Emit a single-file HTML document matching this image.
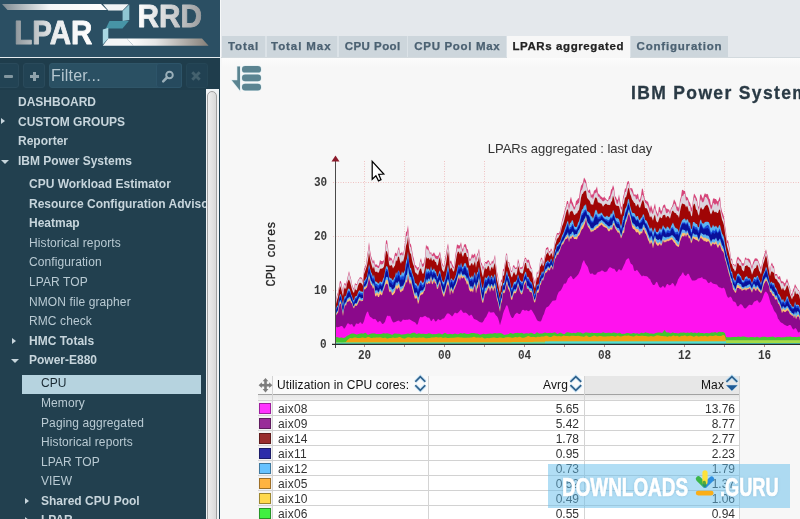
<!DOCTYPE html>
<html>
<head>
<meta charset="utf-8">
<title>LPAR2RRD</title>
<style>
*{box-sizing:border-box;margin:0;padding:0}
html,body{width:800px;height:519px;overflow:hidden;background:#f7f7f7;font-family:"Liberation Sans",sans-serif;}
#root{position:absolute;left:0;top:0;width:800px;height:519px;overflow:hidden;background:#f7f7f7;will-change:transform}
.abs{position:absolute}
/* sidebar */
#side{position:absolute;left:0;top:0;width:220px;height:519px;background:#22404f;overflow:hidden}
#logo{position:absolute;left:0;top:0;width:220px;height:57px;background:#2b4f63}
#logoline{position:absolute;left:0;top:56.6px;width:220px;height:1.2px;background:#e6ecef}
#tool{position:absolute;left:0;top:58px;width:220px;height:32px;background:#1f3d4c}
.tbtn{position:absolute;top:63px;height:25px;border:1px solid #2a4a5b;border-radius:3px;background:#224354}
.tree{position:absolute;white-space:nowrap;font-size:12px;line-height:14px;color:#b9cad3;letter-spacing:0.1px}
.tree.b{font-weight:bold;color:#c7d5dc;letter-spacing:0}
.arr-r{position:absolute;width:0;height:0;border-top:3.5px solid transparent;border-bottom:3.5px solid transparent;border-left:4px solid #c7d5dc}
.arr-d{position:absolute;width:0;height:0;border-left:4px solid transparent;border-right:4px solid transparent;border-top:4.5px solid #c7d5dc}
#sel{position:absolute;left:22px;top:374.5px;width:179px;height:19px;background:#b6d3df}
#sbtrack{position:absolute;left:206px;top:89px;width:13.2px;height:430px;background:#f1f4f6}
#sbthumb{position:absolute;left:207px;top:91px;width:10.4px;height:440px;background:linear-gradient(90deg,#ededed,#d9d9d9);border:1px solid #a0a0a0;border-radius:5.2px}
/* main */
#topbg{position:absolute;left:220px;top:0;width:580px;height:36px;background:#e4e8ec}
#tabrow{position:absolute;left:220px;top:36px;width:580px;height:22px;background:#e4e8ec}
.tab{position:absolute;top:36px;height:22px;background:#d0d8dd;border:1px solid #c3ccd2;border-bottom:none;color:#4b6172;font-weight:bold;font-size:11.5px;line-height:20px;text-align:center;white-space:nowrap;letter-spacing:0.55px}
.tsep{position:absolute;top:36px;width:1.5px;height:21px;background:#dbe2e7}
.tt{position:absolute;top:35.5px;height:20px;line-height:20px;font-size:11.5px;font-weight:bold;color:#4b6172;white-space:nowrap;-webkit-text-stroke:0.25px currentColor}
.tab.act{background:#f7f7f7;color:#222;border-color:#c9d0d5}
#tabline{position:absolute;left:220px;top:57px;width:580px;height:1px;background:#d3dade}
#leftedge{position:absolute;left:220.2px;top:0;width:1.3px;height:519px;background:#f6f8f9}
#h1{position:absolute;left:631px;top:83px;font-size:17.5px;font-weight:bold;color:#2a3a45;white-space:nowrap;letter-spacing:1.35px;-webkit-text-stroke:0.3px #2a3a45}
#ctitle{position:absolute;left:470px;top:141px;width:200px;text-align:center;font-size:13px;color:#333;white-space:nowrap}
.ax{position:absolute;font-family:"Liberation Mono",monospace;font-weight:bold;font-size:12.8px;color:#3a3a3a;line-height:12px;transform:scaleX(0.86);transform-origin:left center;white-space:nowrap}
/* table */
.th{position:absolute;top:377px;height:17px;font-size:12px;line-height:17px;color:#111;white-space:nowrap;letter-spacing:0.11px}
.row{position:absolute;left:258px;width:482px;height:15px;background:linear-gradient(90deg,#f3f3f3 0,#f3f3f3 14px,#fff 14px);border-top:1px solid #d2d2d2}
.row .sw{position:absolute;left:1px;top:2px;width:12px;height:11px;border:1px solid rgba(0,0,0,0.38)}
.row .nm{position:absolute;left:20px;top:1px;font-size:12px;line-height:14px;color:#333;letter-spacing:0.2px}
.row .v1{position:absolute;left:171px;width:150px;text-align:right;top:1px;font-size:12px;line-height:14px;color:#333}
.row .v2{position:absolute;left:327px;width:150px;text-align:right;top:1px;font-size:12px;line-height:14px;color:#333}
.vl{position:absolute;width:1px;background:#d4d4d4}
</style>
</head>
<body>
<div id="root">

<!-- ============ MAIN ============ -->
<div id="topbg"></div>
<div id="tabrow"></div>
<div id="tabline"></div>
<div class="abs" style="left:221.5px;top:58px;width:579px;height:10px;background:linear-gradient(#fcfcfc,#f7f7f7)"></div>
<div class="abs" style="left:221.5px;top:36px;width:506px;height:21px;background:#cdd6dc"></div>
<div class="abs" style="left:507px;top:36px;width:122.5px;height:22px;background:#f7f7f7"></div>
<div class="tsep" style="left:265px"></div>
<div class="tsep" style="left:337px"></div>
<div class="tsep" style="left:406.5px"></div>
<div class="tsep" style="left:505.5px"></div>
<div class="tsep" style="left:629.5px"></div>
<div class="tt" style="left:227.9px;letter-spacing:0.92px">Total</div>
<div class="tt" style="left:271.1px;letter-spacing:0.91px">Total Max</div>
<div class="tt" style="left:344.7px;letter-spacing:0.46px">CPU Pool</div>
<div class="tt" style="left:414.3px;letter-spacing:0.68px">CPU Pool Max</div>
<div class="tt" style="left:512.4px;letter-spacing:0.6px;color:#222">LPARs aggregated</div>
<div class="tt" style="left:636.6px;letter-spacing:0.8px">Configuration</div>

<div id="h1">IBM Power Systems</div>
<div id="ctitle">LPARs aggregated : last day</div>

<!-- chart -->
<svg class="abs" style="left:0;top:0" width="800" height="519" viewBox="0 0 800 519">
<path d="M333,182.5 H800" stroke="#efc2c2" stroke-width="1" stroke-dasharray="1 1.5" fill="none"/>
<path d="M333,236.5 H800" stroke="#efc2c2" stroke-width="1" stroke-dasharray="1 1.5" fill="none"/>
<path d="M333,290.5 H800" stroke="#efc2c2" stroke-width="1" stroke-dasharray="1 1.5" fill="none"/>
<path d="M364.5,161 V347" stroke="#efc2c2" stroke-width="1" stroke-dasharray="1 1.5" fill="none"/>
<path d="M404.5,161 V347" stroke="#efc2c2" stroke-width="1" stroke-dasharray="1 1.5" fill="none"/>
<path d="M444.5,161 V347" stroke="#efc2c2" stroke-width="1" stroke-dasharray="1 1.5" fill="none"/>
<path d="M484.5,161 V347" stroke="#efc2c2" stroke-width="1" stroke-dasharray="1 1.5" fill="none"/>
<path d="M524.5,161 V347" stroke="#efc2c2" stroke-width="1" stroke-dasharray="1 1.5" fill="none"/>
<path d="M564.5,161 V347" stroke="#efc2c2" stroke-width="1" stroke-dasharray="1 1.5" fill="none"/>
<path d="M604.5,161 V347" stroke="#efc2c2" stroke-width="1" stroke-dasharray="1 1.5" fill="none"/>
<path d="M644.5,161 V347" stroke="#efc2c2" stroke-width="1" stroke-dasharray="1 1.5" fill="none"/>
<path d="M684.5,161 V347" stroke="#efc2c2" stroke-width="1" stroke-dasharray="1 1.5" fill="none"/>
<path d="M724.5,161 V347" stroke="#efc2c2" stroke-width="1" stroke-dasharray="1 1.5" fill="none"/>
<path d="M764.5,161 V347" stroke="#efc2c2" stroke-width="1" stroke-dasharray="1 1.5" fill="none"/>
<path fill="#d6457a" d="M336,299.3L337,295.1L338,292.3L339,286.5L340,280.7L341,281.6L342,286.2L343,291.0L344,283.9L345,282.8L346,284.4L347,279.6L348,275.3L349,271.1L350,275.2L351,278.5L352,284.0L353,286.9L354,288.8L355,283.0L356,283.9L357,283.9L358,280.0L359,278.9L360,277.0L361,277.4L362,277.8L363,281.1L364,269.1L365,266.8L366,264.0L367,256.2L368,250.2L369,242.0L370,250.1L371,255.7L372,258.7L373,262.0L374,259.5L375,264.5L376,264.5L377,264.4L378,266.2L379,265.0L380,259.7L381,261.0L382,261.0L383,261.2L384,259.4L385,251.0L386,240.8L387,239.9L388,246.9L389,256.2L390,258.1L391,257.6L392,259.0L393,262.1L394,257.5L395,253.3L396,252.4L397,254.3L398,249.0L399,246.8L400,252.8L401,253.6L402,251.6L403,254.6L404,249.7L405,242.3L406,232.0L407,231.2L408,224.9L409,235.8L410,243.2L411,244.6L412,249.8L413,255.7L414,259.3L415,265.0L416,265.4L417,267.5L418,267.4L419,266.8L420,261.1L421,258.0L422,263.5L423,264.1L424,262.3L425,256.4L426,244.6L427,246.8L428,246.1L429,249.6L430,253.2L431,251.8L432,254.8L433,253.4L434,252.3L435,254.2L436,256.0L437,255.8L438,256.3L439,254.0L440,251.4L441,257.0L442,262.5L443,265.2L444,265.9L445,258.8L446,253.8L447,247.7L448,243.2L449,249.5L450,261.4L451,260.3L452,263.4L453,265.5L454,267.4L455,257.2L456,251.0L457,244.3L458,244.9L459,245.6L460,245.2L461,242.1L462,247.6L463,249.7L464,244.9L465,244.1L466,244.4L467,249.0L468,249.4L469,257.2L470,260.1L471,257.6L472,253.6L473,255.4L474,254.6L475,253.3L476,258.7L477,254.5L478,252.6L479,248.6L480,256.2L481,261.9L482,263.8L483,267.6L484,265.5L485,261.9L486,261.9L487,261.6L488,259.9L489,260.7L490,263.6L491,263.7L492,260.5L493,261.8L494,258.4L495,254.7L496,263.9L497,271.8L498,275.9L499,282.7L500,288.0L501,279.8L502,279.4L503,269.6L504,268.4L505,261.7L506,254.0L507,253.3L508,262.8L509,261.8L510,265.5L511,270.0L512,271.2L513,265.7L514,264.9L515,267.2L516,268.0L517,266.6L518,258.8L519,262.0L520,267.7L521,267.1L522,267.6L523,265.4L524,260.6L525,257.6L526,257.9L527,260.5L528,259.4L529,260.1L530,263.9L531,267.1L532,268.9L533,276.0L534,279.1L535,282.5L536,277.5L537,271.2L538,273.2L539,269.6L540,261.6L541,258.1L542,257.6L543,263.1L544,259.6L545,254.4L546,248.0L547,247.7L548,246.7L549,250.9L550,251.2L551,248.3L552,249.9L553,253.5L554,246.3L555,240.1L556,236.2L557,232.9L558,232.9L559,233.3L560,230.4L561,225.6L562,220.5L563,216.7L564,213.3L565,209.0L566,205.7L567,201.0L568,201.0L569,206.5L570,200.1L571,196.4L572,201.3L573,203.2L574,206.7L575,206.4L576,201.1L577,200.3L578,198.6L579,198.1L580,190.8L581,185.8L582,184.6L583,182.3L584,177.6L585,179.1L586,180.9L587,185.9L588,190.9L589,190.0L590,189.2L591,195.8L592,193.4L593,194.9L594,190.4L595,190.2L596,188.9L597,186.3L598,193.3L599,193.9L600,195.3L601,196.6L602,197.1L603,198.2L604,196.7L605,197.8L606,198.8L607,200.0L608,200.3L609,196.6L610,195.6L611,189.7L612,188.8L613,185.1L614,187.8L615,196.0L616,197.2L617,199.7L618,199.4L619,194.3L620,200.2L621,207.0L622,206.3L623,197.2L624,193.8L625,188.2L626,188.7L627,182.9L628,180.9L629,181.4L630,187.7L631,188.6L632,187.9L633,190.8L634,195.2L635,193.8L636,195.4L637,194.6L638,193.4L639,199.4L640,199.6L641,195.6L642,188.3L643,189.6L644,195.3L645,199.7L646,200.3L647,201.6L648,201.5L649,205.0L650,208.7L651,205.0L652,208.1L653,211.5L654,206.7L655,203.2L656,209.8L657,212.3L658,214.2L659,206.4L660,207.4L661,211.2L662,209.8L663,205.7L664,204.7L665,204.5L666,208.4L667,208.4L668,209.4L669,209.3L670,212.0L671,208.0L672,206.7L673,203.6L674,199.3L675,201.1L676,203.0L677,207.4L678,206.1L679,208.4L680,200.1L681,196.5L682,189.8L683,189.9L684,191.1L685,190.8L686,196.7L687,196.8L688,198.3L689,201.3L690,202.7L691,206.1L692,208.2L693,199.6L694,193.4L695,194.8L696,196.7L697,199.0L698,205.2L699,207.2L700,195.3L701,194.0L702,196.8L703,198.7L704,195.2L705,193.0L706,194.6L707,193.7L708,194.4L709,198.3L710,199.6L711,205.7L712,204.1L713,198.8L714,198.2L715,199.1L716,199.1L717,201.1L718,201.4L719,198.8L720,196.5L721,206.7L722,211.6L723,213.8L724,217.1L725,225.2L726,231.4L727,240.8L728,240.0L729,245.3L730,250.5L731,258.7L732,258.5L733,263.9L734,264.1L735,266.1L736,263.3L737,257.9L738,256.4L739,258.0L740,259.3L741,260.0L742,263.4L743,262.7L744,263.8L745,257.8L746,257.5L747,259.4L748,258.0L749,259.3L750,259.6L751,263.6L752,267.0L753,262.6L754,260.3L755,258.3L756,258.5L757,258.6L758,259.9L759,262.4L760,265.5L761,267.8L762,263.2L763,258.2L764,255.8L765,252.2L766,249.2L767,253.6L768,257.8L769,265.1L770,271.1L771,264.4L772,262.4L773,265.6L774,266.2L775,273.9L776,274.0L777,273.9L778,276.9L779,276.5L780,276.0L781,280.3L782,281.5L783,281.2L784,282.8L785,283.5L786,281.1L787,278.5L788,281.5L789,285.0L790,287.4L791,292.9L792,294.4L793,289.7L794,287.7L795,284.1L796,286.0L797,287.7L798,289.6L799,290.2L800,293.9L800,345.0L336,345.0Z"/>
<path fill="#dcd5de" d="M336,300.8L337,296.6L338,293.9L339,288.4L340,283.1L341,284.0L342,288.4L343,293.0L344,285.2L345,284.1L346,286.7L347,281.2L348,276.9L349,272.7L350,276.7L351,279.8L352,285.3L353,288.5L354,290.3L355,284.3L356,285.5L357,285.1L358,281.4L359,279.4L360,278.6L361,278.6L362,279.4L363,283.6L364,271.8L365,268.7L366,266.0L367,258.7L368,252.4L369,245.8L370,253.3L371,258.4L372,261.3L373,263.7L374,262.1L375,266.8L376,266.8L377,267.1L378,267.9L379,268.1L380,263.9L381,264.6L382,264.3L383,264.0L384,261.6L385,253.9L386,244.5L387,243.4L388,249.2L389,260.8L390,261.0L391,259.8L392,261.1L393,264.4L394,260.4L395,256.3L396,255.5L397,256.7L398,250.5L399,249.1L400,255.2L401,255.3L402,254.0L403,256.1L404,251.9L405,245.9L406,235.8L407,236.4L408,229.9L409,240.1L410,246.4L411,247.7L412,252.6L413,258.9L414,262.3L415,267.8L416,267.4L417,269.9L418,270.5L419,267.8L420,262.4L421,261.0L422,266.5L423,267.1L424,265.4L425,259.8L426,247.4L427,250.0L428,249.0L429,251.6L430,254.5L431,252.8L432,256.2L433,256.1L434,255.4L435,257.7L436,259.1L437,258.8L438,259.4L439,256.5L440,253.8L441,259.6L442,264.9L443,265.9L444,267.1L445,261.5L446,257.1L447,250.8L448,245.4L449,252.6L450,263.8L451,263.1L452,266.4L453,268.0L454,268.5L455,260.0L456,254.0L457,248.6L458,248.2L459,248.8L460,248.1L461,244.6L462,250.5L463,252.3L464,246.8L465,247.1L466,249.3L467,253.5L468,252.4L469,259.9L470,261.3L471,259.8L472,256.9L473,258.6L474,257.4L475,256.4L476,262.5L477,257.1L478,254.2L479,250.8L480,259.0L481,264.3L482,266.0L483,270.7L484,266.6L485,262.9L486,263.6L487,264.3L488,262.1L489,262.2L490,265.5L491,264.4L492,262.7L493,264.1L494,260.7L495,256.2L496,265.8L497,274.3L498,278.2L499,284.9L500,290.2L501,282.6L502,281.7L503,271.7L504,270.8L505,263.9L506,256.0L507,253.9L508,263.2L509,263.1L510,267.3L511,271.7L512,272.1L513,267.2L514,267.2L515,269.0L516,269.1L517,268.4L518,261.8L519,264.3L520,269.6L521,268.6L522,269.3L523,267.2L524,263.0L525,259.2L526,259.0L527,263.0L528,261.9L529,263.2L530,267.8L531,268.7L532,269.2L533,277.0L534,281.8L535,284.5L536,279.0L537,272.9L538,274.5L539,270.3L540,262.3L541,259.7L542,259.2L543,264.8L544,261.3L545,256.2L546,250.0L547,249.6L548,249.0L549,252.6L550,252.7L551,250.0L552,250.9L553,254.9L554,247.6L555,240.9L556,238.4L557,235.1L558,234.3L559,235.0L560,233.0L561,227.7L562,222.2L563,219.5L564,216.1L565,211.0L566,208.5L567,204.3L568,204.1L569,209.9L570,204.5L571,202.7L572,205.3L573,207.0L574,210.0L575,208.7L576,205.3L577,204.8L578,203.6L579,202.7L580,196.0L581,190.7L582,189.8L583,186.8L584,181.0L585,182.9L586,183.4L587,188.6L588,191.9L589,192.7L590,193.3L591,198.2L592,196.7L593,199.6L594,195.5L595,192.5L596,193.6L597,191.4L598,196.9L599,196.2L600,198.8L601,199.0L602,200.4L603,201.6L604,201.1L605,200.0L606,199.5L607,201.2L608,201.2L609,198.9L610,199.6L611,195.5L612,193.1L613,188.9L614,191.0L615,198.8L616,200.6L617,204.6L618,203.1L619,199.0L620,204.7L621,209.4L622,209.4L623,199.9L624,196.5L625,192.1L626,191.7L627,186.7L628,183.4L629,183.8L630,188.4L631,190.6L632,191.9L633,194.5L634,196.8L635,195.5L636,199.3L637,199.3L638,197.9L639,201.5L640,202.5L641,199.6L642,194.7L643,195.3L644,198.5L645,202.4L646,203.2L647,204.4L648,206.0L649,209.2L650,213.9L651,210.2L652,213.2L653,214.1L654,209.8L655,207.7L656,212.8L657,215.6L658,216.9L659,211.8L660,212.6L661,214.8L662,213.0L663,208.4L664,207.3L665,207.9L666,212.7L667,213.5L668,212.1L669,211.3L670,214.7L671,210.0L672,207.4L673,206.5L674,203.2L675,204.3L676,207.3L677,211.0L678,210.4L679,212.3L680,203.4L681,199.6L682,195.5L683,196.2L684,193.8L685,194.0L686,201.1L687,199.7L688,200.7L689,206.2L690,205.6L691,211.8L692,210.7L693,202.9L694,197.8L695,197.4L696,200.7L697,201.6L698,207.4L699,210.5L700,201.5L701,199.1L702,202.0L703,202.5L704,201.0L705,197.1L706,197.0L707,198.2L708,199.9L709,203.6L710,206.1L711,209.5L712,208.1L713,202.7L714,203.4L715,204.9L716,203.5L717,203.8L718,206.7L719,201.5L720,201.0L721,210.9L722,215.3L723,218.1L724,220.6L725,228.3L726,234.5L727,242.9L728,243.3L729,248.1L730,252.4L731,260.9L732,259.4L733,264.8L734,265.2L735,266.8L736,265.6L737,261.8L738,258.8L739,259.9L740,261.5L741,261.9L742,266.3L743,265.3L744,265.7L745,260.4L746,259.1L747,260.2L748,260.0L749,262.4L750,262.8L751,266.0L752,269.3L753,265.2L754,263.0L755,260.8L756,261.0L757,260.8L758,261.5L759,264.1L760,267.2L761,270.6L762,264.7L763,259.8L764,258.0L765,255.6L766,251.6L767,255.2L768,260.3L769,266.7L770,272.8L771,266.0L772,265.0L773,268.5L774,268.1L775,275.8L776,275.6L777,275.7L778,278.8L779,279.2L780,279.4L781,283.0L782,283.5L783,282.7L784,286.3L785,286.6L786,283.6L787,281.7L788,283.8L789,286.1L790,289.1L791,294.6L792,297.0L793,292.4L794,291.0L795,286.6L796,288.2L797,288.5L798,290.6L799,291.2L800,295.3L800,345.0L336,345.0Z"/>
<path fill="#a00505" d="M336,303.9L337,300.1L338,297.2L339,290.4L340,286.0L341,288.0L342,292.2L343,295.9L344,289.6L345,287.2L346,289.4L347,283.9L348,280.7L349,279.6L350,281.9L351,285.4L352,289.2L353,291.9L354,293.1L355,288.6L356,290.6L357,289.7L358,285.8L359,283.4L360,282.6L361,283.2L362,283.8L363,285.9L364,274.2L365,271.4L366,268.6L367,265.4L368,259.9L369,252.2L370,258.3L371,262.7L372,266.2L373,268.9L374,266.3L375,271.4L376,272.1L377,271.6L378,272.9L379,272.0L380,268.8L381,268.7L382,268.6L383,268.1L384,266.2L385,258.4L386,251.0L387,251.5L388,255.3L389,263.9L390,266.2L391,265.0L392,265.4L393,268.5L394,266.7L395,265.4L396,259.9L397,261.6L398,256.8L399,256.7L400,261.5L401,263.8L402,260.6L403,262.0L404,258.3L405,253.5L406,245.7L407,242.9L408,236.7L409,247.5L410,253.0L411,254.0L412,259.9L413,263.9L414,266.3L415,272.1L416,273.3L417,273.8L418,275.4L419,271.6L420,269.1L421,268.2L422,272.6L423,274.3L424,272.2L425,266.8L426,256.5L427,258.9L428,257.7L429,258.4L430,260.2L431,257.1L432,261.0L433,259.9L434,258.9L435,261.8L436,262.1L437,265.7L438,264.6L439,259.3L440,257.1L441,263.8L442,269.4L443,271.0L444,271.9L445,268.1L446,263.7L447,256.6L448,251.1L449,257.9L450,269.7L451,267.4L452,268.5L453,271.2L454,271.4L455,266.4L456,260.1L457,254.2L458,251.4L459,252.1L460,254.6L461,250.8L462,254.8L463,257.0L464,253.5L465,252.8L466,253.0L467,257.3L468,256.7L469,264.8L470,266.3L471,263.9L472,262.7L473,265.7L474,263.7L475,261.0L476,267.8L477,261.7L478,261.3L479,256.4L480,264.1L481,268.9L482,273.9L483,277.2L484,271.3L485,267.1L486,269.4L487,268.5L488,265.8L489,266.5L490,271.6L491,268.3L492,266.5L493,269.4L494,264.9L495,262.9L496,270.8L497,279.9L498,283.8L499,288.9L500,293.3L501,286.6L502,285.1L503,275.7L504,275.5L505,268.1L506,262.0L507,259.3L508,266.5L509,268.3L510,272.0L511,276.1L512,277.6L513,274.2L514,271.7L515,274.0L516,275.5L517,272.9L518,265.8L519,268.3L520,272.8L521,272.6L522,274.0L523,272.8L524,268.1L525,263.1L526,263.1L527,268.7L528,268.0L529,268.8L530,271.2L531,271.5L532,273.4L533,279.5L534,285.5L535,288.4L536,282.6L537,277.0L538,278.0L539,274.6L540,267.1L541,265.6L542,262.8L543,266.4L544,264.4L545,259.1L546,254.7L547,253.6L548,252.1L549,255.3L550,256.1L551,252.9L552,254.0L553,257.7L554,250.8L555,244.9L556,242.6L557,238.5L558,238.3L559,236.1L560,234.6L561,231.0L562,226.6L563,224.3L564,220.9L565,217.0L566,212.7L567,209.8L568,209.3L569,216.1L570,211.8L571,211.4L572,210.6L573,212.3L574,214.8L575,215.0L576,213.3L577,213.5L578,211.0L579,209.9L580,204.6L581,197.8L582,194.3L583,193.4L584,191.3L585,191.3L586,190.3L587,197.5L588,198.9L589,200.0L590,201.4L591,204.8L592,203.9L593,205.2L594,201.6L595,198.0L596,197.3L597,198.8L598,202.7L599,202.2L600,203.4L601,203.3L602,204.6L603,206.7L604,205.2L605,204.3L606,203.4L607,204.5L608,205.1L609,204.7L610,205.2L611,201.9L612,201.0L613,195.5L614,198.5L615,203.4L616,205.4L617,205.7L618,206.0L619,206.3L620,210.2L621,215.3L622,212.8L623,204.5L624,203.3L625,197.4L626,197.3L627,194.0L628,188.7L629,187.8L630,193.7L631,196.1L632,199.5L633,200.7L634,202.7L635,203.2L636,206.5L637,205.0L638,203.7L639,207.1L640,208.1L641,204.8L642,201.6L643,199.7L644,202.6L645,208.0L646,208.3L647,208.5L648,211.3L649,213.7L650,217.6L651,216.1L652,217.9L653,220.8L654,216.6L655,214.6L656,220.3L657,222.2L658,222.2L659,219.3L660,216.6L661,218.2L662,218.0L663,215.0L664,215.3L665,214.5L666,218.1L667,216.3L668,216.1L669,217.0L670,218.8L671,214.7L672,211.3L673,210.6L674,212.2L675,212.9L676,213.2L677,215.2L678,215.3L679,218.1L680,211.5L681,206.7L682,203.4L683,203.7L684,204.2L685,204.5L686,207.6L687,205.6L688,207.9L689,212.1L690,210.5L691,215.4L692,216.4L693,206.6L694,203.6L695,204.4L696,209.6L697,210.0L698,214.0L699,215.8L700,209.5L701,207.1L702,209.0L703,209.8L704,208.3L705,206.1L706,205.5L707,204.4L708,206.1L709,208.6L710,212.4L711,214.6L712,212.6L713,209.5L714,211.6L715,212.4L716,211.6L717,213.0L718,213.0L719,210.0L720,209.6L721,215.0L722,219.8L723,222.1L724,225.6L725,232.7L726,238.8L727,246.0L728,249.5L729,253.3L730,257.9L731,263.3L732,264.4L733,268.3L734,269.3L735,271.8L736,269.7L737,263.8L738,262.8L739,264.8L740,266.0L741,265.4L742,269.7L743,270.7L744,271.5L745,265.9L746,265.9L747,265.1L748,266.5L749,267.2L750,267.5L751,270.7L752,274.7L753,272.0L754,269.3L755,268.2L756,267.8L757,264.6L758,265.9L759,270.5L760,272.1L761,274.5L762,269.6L763,264.4L764,261.7L765,258.2L766,255.3L767,259.0L768,265.8L769,270.8L770,276.3L771,272.0L772,271.3L773,272.6L774,272.7L775,278.4L776,279.0L777,279.8L778,281.9L779,282.8L780,284.8L781,288.0L782,290.1L783,287.5L784,290.2L785,290.4L786,288.2L787,285.0L788,286.5L789,290.1L790,294.6L791,297.1L792,299.4L793,296.6L794,296.3L795,290.5L796,294.4L797,293.3L798,294.3L799,295.0L800,299.3L800,345.0L336,345.0Z"/>
<path fill="#5cb4f2" d="M336,309.5L337,306.3L338,305.1L339,298.0L340,294.2L341,294.6L342,299.7L343,304.5L344,298.2L345,295.4L346,296.5L347,291.9L348,288.7L349,288.5L350,289.7L351,294.1L352,296.2L353,299.4L354,300.6L355,296.4L356,296.3L357,295.5L358,292.5L359,290.6L360,290.4L361,291.8L362,291.2L363,292.2L364,281.1L365,280.0L366,278.2L367,276.5L368,271.2L369,263.9L370,268.2L371,272.0L372,273.7L373,277.3L374,274.5L375,281.1L376,281.8L377,281.9L378,283.5L379,283.3L380,281.3L381,282.1L382,282.2L383,279.1L384,277.1L385,271.6L386,266.6L387,266.1L388,267.9L389,276.3L390,278.6L391,277.7L392,279.6L393,280.5L394,278.0L395,276.6L396,271.9L397,274.5L398,271.0L399,270.4L400,274.4L401,275.6L402,271.2L403,273.6L404,272.1L405,270.0L406,261.3L407,258.6L408,251.4L409,261.5L410,267.8L411,267.9L412,272.3L413,275.3L414,278.0L415,283.1L416,283.2L417,284.4L418,287.1L419,284.3L420,281.6L421,280.1L422,282.3L423,283.1L424,281.2L425,276.8L426,267.3L427,269.7L428,268.5L429,269.1L430,270.9L431,266.1L432,270.2L433,269.8L434,268.2L435,271.1L436,271.5L437,276.7L438,275.7L439,272.0L440,270.3L441,275.5L442,279.8L443,281.7L444,282.0L445,278.6L446,275.0L447,269.7L448,264.5L449,270.2L450,281.6L451,278.3L452,278.8L453,281.0L454,279.6L455,277.5L456,274.4L457,270.0L458,266.1L459,264.3L460,267.0L461,262.6L462,266.3L463,267.5L464,264.0L465,262.8L466,263.8L467,268.2L468,267.1L469,274.9L470,277.5L471,277.4L472,275.3L473,278.1L474,274.2L475,271.8L476,278.5L477,272.4L478,271.7L479,266.6L480,275.6L481,281.3L482,286.6L483,288.5L484,282.4L485,276.5L486,278.4L487,277.6L488,275.9L489,275.3L490,279.4L491,275.7L492,275.2L493,279.1L494,275.8L495,273.8L496,280.7L497,287.6L498,290.5L499,295.7L500,299.7L501,293.1L502,291.5L503,283.0L504,283.0L505,278.9L506,273.8L507,270.4L508,275.4L509,277.0L510,281.3L511,286.9L512,288.6L513,285.0L514,281.8L515,282.0L516,281.3L517,279.2L518,274.2L519,277.3L520,280.3L521,280.7L522,282.3L523,280.6L524,275.5L525,272.6L526,271.6L527,277.3L528,276.4L529,278.2L530,280.9L531,281.8L532,283.1L533,288.0L534,292.8L535,294.7L536,289.4L537,283.9L538,285.4L539,283.0L540,276.1L541,274.6L542,271.1L543,272.9L544,270.1L545,264.9L546,262.1L547,261.4L548,260.0L549,262.2L550,261.8L551,258.2L552,260.2L553,264.0L554,257.2L555,250.5L556,248.5L557,244.6L558,244.8L559,242.5L560,241.9L561,239.2L562,235.7L563,233.8L564,231.4L565,228.3L566,225.5L567,222.2L568,220.4L569,226.8L570,223.1L571,222.4L572,220.1L573,220.8L574,225.4L575,227.0L576,227.1L577,226.6L578,222.8L579,221.3L580,217.4L581,212.6L582,209.4L583,208.8L584,205.6L585,205.5L586,204.1L587,210.9L588,211.6L589,212.2L590,213.0L591,216.4L592,216.3L593,218.7L594,215.3L595,211.1L596,209.6L597,210.9L598,214.4L599,213.3L600,213.9L601,212.6L602,212.9L603,215.0L604,216.3L605,216.9L606,216.5L607,215.4L608,216.8L609,216.9L610,216.3L611,213.1L612,214.4L613,209.8L614,211.7L615,216.4L616,218.4L617,218.0L618,218.6L619,219.3L620,223.1L621,226.7L622,223.0L623,216.3L624,215.6L625,209.1L626,207.6L627,205.0L628,199.3L629,199.2L630,205.6L631,209.0L632,212.6L633,212.9L634,213.0L635,214.1L636,217.0L637,216.0L638,215.9L639,219.6L640,220.0L641,217.8L642,217.2L643,214.2L644,214.7L645,219.7L646,220.3L647,221.2L648,224.0L649,226.3L650,229.2L651,227.3L652,228.8L653,232.6L654,229.2L655,227.3L656,231.4L657,232.2L658,232.0L659,229.8L660,227.8L661,230.3L662,228.0L663,224.9L664,227.1L665,227.7L666,229.2L667,226.2L668,227.2L669,227.8L670,230.0L671,226.3L672,224.2L673,222.6L674,225.1L675,227.3L676,228.2L677,228.4L678,229.6L679,232.4L680,226.3L681,223.2L682,220.6L683,219.4L684,218.8L685,218.4L686,221.1L687,218.9L688,219.7L689,222.9L690,222.1L691,228.7L692,228.8L693,222.0L694,222.1L695,222.8L696,224.0L697,224.1L698,227.2L699,227.1L700,220.8L701,219.6L702,222.9L703,223.6L704,223.4L705,221.8L706,221.9L707,221.5L708,222.1L709,222.3L710,225.3L711,228.1L712,227.2L713,224.6L714,226.6L715,226.7L716,225.6L717,227.3L718,228.0L719,225.5L720,225.0L721,229.5L722,233.6L723,234.9L724,237.6L725,244.0L726,249.1L727,254.5L728,257.2L729,261.4L730,266.6L731,271.4L732,271.5L733,277.2L734,278.8L735,281.3L736,279.4L737,274.6L738,273.5L739,273.8L740,275.5L741,276.2L742,280.0L743,279.8L744,281.0L745,276.9L746,276.8L747,275.9L748,278.2L749,278.5L750,278.2L751,280.8L752,283.8L753,280.2L754,277.2L755,276.9L756,277.8L757,275.5L758,276.2L759,279.2L760,281.0L761,284.0L762,279.4L763,274.7L764,272.5L765,270.3L766,266.4L767,268.9L768,274.1L769,278.5L770,284.1L771,281.5L772,282.2L773,283.5L774,282.5L775,286.8L776,287.9L777,289.8L778,293.4L779,294.3L780,295.8L781,298.1L782,300.8L783,298.8L784,301.4L785,301.7L786,299.1L787,295.7L788,297.2L789,301.0L790,303.6L791,304.3L792,306.8L793,306.6L794,306.9L795,301.3L796,305.1L797,304.4L798,304.8L799,305.3L800,308.8L800,345.0L336,345.0Z"/>
<path fill="#1848d8" d="M336,310.0L337,307.1L338,306.4L339,299.2L340,295.3L341,295.8L342,301.6L343,306.7L344,300.2L345,296.9L346,298.0L347,293.7L348,290.9L349,290.6L350,291.4L351,295.3L352,297.3L353,300.7L354,302.2L355,297.9L356,297.8L357,297.1L358,294.3L359,292.3L360,292.3L361,293.4L362,292.7L363,293.7L364,282.5L365,281.6L366,279.5L367,278.0L368,272.7L369,266.1L370,270.3L371,274.1L372,275.9L373,279.0L374,275.9L375,282.9L376,284.1L377,284.0L378,285.6L379,284.9L380,282.6L381,283.9L382,284.7L383,281.7L384,279.2L385,273.5L386,268.8L387,268.8L388,270.4L389,278.4L390,280.6L391,279.5L392,281.6L393,282.7L394,280.0L395,278.5L396,273.5L397,275.7L398,271.5L399,271.1L400,276.1L401,278.1L402,274.9L403,277.1L404,275.0L405,272.2L406,264.4L407,262.5L408,255.0L409,264.0L410,270.5L411,270.1L412,274.3L413,276.8L414,280.2L415,285.0L416,285.3L417,286.5L418,289.2L419,285.9L420,283.2L421,282.1L422,284.5L423,284.9L424,283.0L425,279.2L426,270.3L427,273.0L428,271.3L429,271.2L430,272.7L431,267.9L432,272.5L433,272.1L434,270.5L435,273.3L436,273.2L437,278.4L438,277.6L439,274.3L440,272.7L441,277.6L442,281.7L443,283.9L444,284.5L445,280.4L446,277.2L447,272.8L448,268.2L449,272.9L450,283.7L451,279.7L452,280.1L453,282.6L454,281.0L455,278.9L456,276.0L457,271.7L458,267.5L459,265.1L460,267.6L461,263.9L462,267.9L463,269.5L464,266.2L465,265.9L466,266.8L467,271.1L468,269.4L469,276.4L470,278.9L471,279.4L472,277.8L473,280.2L474,275.7L475,273.3L476,280.5L477,274.6L478,274.1L479,268.9L480,277.6L481,283.5L482,288.9L483,290.6L484,284.2L485,278.6L486,280.6L487,279.2L488,276.9L489,276.1L490,280.6L491,277.0L492,276.9L493,280.9L494,277.8L495,275.6L496,282.4L497,289.2L498,292.2L499,297.4L500,301.2L501,294.5L502,293.3L503,284.9L504,285.0L505,281.2L506,276.3L507,273.0L508,277.7L509,278.9L510,282.7L511,288.3L512,289.9L513,286.7L514,283.7L515,284.0L516,283.2L517,280.5L518,275.2L519,278.4L520,281.8L521,282.3L522,283.7L523,282.2L524,277.6L525,275.0L526,273.5L527,279.0L528,277.9L529,279.5L530,282.1L531,283.0L532,284.0L533,288.8L534,293.7L535,295.7L536,290.4L537,284.8L538,286.3L539,283.9L540,276.9L541,275.5L542,272.2L543,274.3L544,271.3L545,266.0L546,263.4L547,262.6L548,261.1L549,263.2L550,262.7L551,259.0L552,261.0L553,264.9L554,258.3L555,252.3L556,250.5L557,246.1L558,246.2L559,244.0L560,243.5L561,240.7L562,237.6L563,235.8L564,233.1L565,230.3L566,227.9L567,224.9L568,222.8L569,229.4L570,227.0L571,227.1L572,224.6L573,223.9L574,227.9L575,229.5L576,229.2L577,228.9L578,225.7L579,224.7L580,220.9L581,216.1L582,213.4L583,213.0L584,210.0L585,210.4L586,208.7L587,214.5L588,214.5L589,215.7L590,217.2L591,221.1L592,220.2L593,221.9L594,218.4L595,215.3L596,214.0L597,215.0L598,217.7L599,216.6L600,216.8L601,214.9L602,214.9L603,216.9L604,218.0L605,218.9L606,219.2L607,219.3L608,220.5L609,219.9L610,218.6L611,216.5L612,218.4L613,214.3L614,214.4L615,218.2L616,220.8L617,221.6L618,222.5L619,222.1L620,225.4L621,228.9L622,225.9L623,219.8L624,219.9L625,213.1L626,211.1L627,208.3L628,203.6L629,203.3L630,209.2L631,212.5L632,215.8L633,216.0L634,216.3L635,217.6L636,220.1L637,219.6L638,218.9L639,222.4L640,222.5L641,220.4L642,219.4L643,216.6L644,217.8L645,222.6L646,223.0L647,224.0L648,226.5L649,228.5L650,231.8L651,230.1L652,232.1L653,237.0L654,232.9L655,229.7L656,232.9L657,233.9L658,234.1L659,232.5L660,230.9L661,233.3L662,231.2L663,227.5L664,229.2L665,230.6L666,233.0L667,230.1L668,230.5L669,230.2L670,231.5L671,228.2L672,227.4L673,227.3L674,230.1L675,231.9L676,232.4L677,231.4L678,232.0L679,234.2L680,228.2L681,225.2L682,222.8L683,222.5L684,222.5L685,222.2L686,224.4L687,222.1L688,222.9L689,226.5L690,226.0L691,232.5L692,231.4L693,225.4L694,226.1L695,226.8L696,227.4L697,227.1L698,229.9L699,230.7L700,224.7L701,222.5L702,225.3L703,227.2L704,228.2L705,226.6L706,226.3L707,225.1L708,225.1L709,226.1L710,229.8L711,232.8L712,231.5L713,229.5L714,231.1L715,230.4L716,228.3L717,231.2L718,232.4L719,229.7L720,228.8L721,233.4L722,237.6L723,238.9L724,242.1L725,248.5L726,252.3L727,256.6L728,259.0L729,263.6L730,268.5L731,273.1L732,273.5L733,279.7L734,280.8L735,282.7L736,280.6L737,276.1L738,275.5L739,275.7L740,277.1L741,277.9L742,282.3L743,281.5L744,282.6L745,278.9L746,279.3L747,277.9L748,279.8L749,279.5L750,279.3L751,281.7L752,284.8L753,281.4L754,279.1L755,279.0L756,279.9L757,277.3L758,277.5L759,280.3L760,282.1L761,285.1L762,281.0L763,276.3L764,274.0L765,271.9L766,268.2L767,270.8L768,275.6L769,279.5L770,284.7L771,282.6L772,283.8L773,285.3L774,284.3L775,288.8L776,289.5L777,291.0L778,294.7L779,296.3L780,298.1L781,300.4L782,302.8L783,300.5L784,302.6L785,302.5L786,300.7L787,297.9L788,299.3L789,302.1L790,304.4L791,305.2L792,307.9L793,307.6L794,308.3L795,303.0L796,306.7L797,305.5L798,305.9L799,306.6L800,310.2L800,345.0L336,345.0Z"/>
<path fill="#0a109a" d="M336,311.5L337,308.3L338,307.3L339,300.1L340,296.7L341,297.5L342,303.7L343,308.6L344,302.2L345,298.4L346,299.1L347,294.9L348,292.7L349,292.3L350,292.5L351,296.1L352,298.7L353,302.5L354,304.1L355,299.7L356,299.3L357,298.4L358,295.9L359,294.2L360,293.9L361,294.9L362,294.4L363,295.6L364,284.5L365,283.7L366,281.5L367,279.0L368,273.8L369,268.0L370,273.0L371,276.5L372,278.2L373,281.5L374,278.4L375,285.2L376,286.3L377,286.5L378,288.4L379,287.6L380,284.5L381,285.7L382,286.6L383,283.8L384,281.4L385,276.0L386,270.8L387,271.0L388,272.5L389,280.7L390,283.0L391,282.4L392,284.5L393,285.3L394,282.6L395,281.1L396,276.2L397,279.1L398,276.2L399,275.0L400,279.3L401,280.4L402,278.4L403,280.7L404,278.8L405,276.1L406,268.0L407,265.4L408,257.8L409,266.9L410,273.0L411,272.2L412,276.8L413,280.0L414,284.2L415,288.4L416,287.6L417,288.7L418,292.4L419,289.5L420,285.8L421,284.7L422,287.0L423,287.4L424,285.4L425,281.8L426,272.9L427,274.8L428,273.2L429,272.9L430,275.2L431,270.0L432,275.1L433,274.2L434,272.2L435,274.5L436,275.0L437,280.5L438,279.1L439,275.0L440,273.5L441,279.1L442,283.3L443,285.3L444,286.5L445,283.0L446,279.8L447,275.6L448,271.5L449,275.6L450,285.7L451,281.6L452,282.4L453,285.1L454,282.7L455,280.0L456,277.8L457,275.0L458,271.6L459,268.2L460,270.0L461,266.8L462,270.4L463,271.8L464,267.6L465,267.8L466,268.5L467,273.8L468,272.2L469,279.2L470,280.9L471,280.9L472,279.9L473,283.3L474,278.9L475,275.2L476,282.2L477,276.7L478,276.5L479,271.0L480,280.0L481,286.1L482,291.5L483,293.0L484,286.6L485,280.6L486,282.8L487,281.4L488,279.2L489,278.1L490,282.5L491,278.9L492,278.9L493,283.4L494,279.9L495,277.3L496,284.0L497,290.8L498,293.8L499,299.1L500,303.1L501,295.7L502,294.0L503,285.7L504,286.8L505,283.7L506,278.1L507,274.5L508,279.6L509,281.3L510,284.6L511,290.6L512,292.1L513,288.6L514,285.1L515,285.4L516,284.8L517,282.4L518,277.1L519,280.4L520,283.5L521,284.4L522,286.0L523,284.0L524,278.9L525,276.4L526,275.2L527,281.3L528,280.4L529,281.9L530,284.1L531,284.8L532,285.7L533,290.7L534,295.8L535,297.8L536,291.9L537,285.9L538,287.3L539,285.3L540,278.3L541,277.2L542,274.3L543,276.4L544,272.8L545,267.3L546,265.2L547,264.5L548,262.6L549,264.4L550,264.1L551,260.3L552,262.1L553,265.8L554,259.5L555,253.6L556,251.7L557,246.8L558,247.2L559,245.2L560,245.0L561,242.0L562,239.0L563,237.6L564,235.1L565,232.4L566,230.0L567,227.2L568,224.6L569,230.8L570,228.7L571,229.2L572,226.6L573,225.5L574,229.3L575,230.6L576,230.5L577,230.4L578,227.0L579,226.2L580,223.0L581,218.5L582,215.3L583,214.9L584,212.2L585,212.5L586,209.9L587,215.3L588,215.1L589,216.8L590,219.3L591,223.1L592,221.7L593,223.3L594,220.2L595,217.3L596,216.3L597,217.3L598,219.6L599,218.4L600,219.2L601,217.0L602,216.3L603,218.0L604,219.1L605,220.1L606,220.7L607,221.3L608,222.5L609,221.7L610,220.0L611,218.1L612,220.1L613,215.8L614,215.5L615,219.5L616,222.7L617,223.7L618,224.3L619,224.0L620,227.5L621,231.3L622,228.1L623,222.1L624,221.6L625,214.7L626,212.5L627,209.6L628,204.9L629,204.8L630,211.0L631,214.4L632,217.3L633,217.3L634,217.1L635,218.4L636,220.8L637,220.8L638,219.8L639,223.1L640,223.6L641,222.6L642,222.0L643,219.1L644,219.3L645,223.6L646,224.3L647,225.9L648,228.7L649,230.6L650,233.7L651,231.8L652,233.6L653,238.6L654,234.9L655,231.5L656,234.2L657,235.0L658,235.6L659,234.2L660,233.2L661,235.8L662,233.4L663,229.0L664,230.6L665,232.2L666,234.8L667,232.3L668,233.0L669,232.7L670,233.4L671,229.9L672,228.9L673,229.0L674,231.8L675,233.8L676,234.8L677,233.9L678,234.5L679,236.1L680,230.4L681,227.1L682,224.4L683,223.6L684,223.9L685,223.3L686,225.5L687,223.6L688,224.7L689,228.6L690,227.9L691,234.5L692,232.7L693,227.1L694,228.1L695,229.1L696,229.7L697,229.2L698,232.3L699,233.1L700,226.9L701,224.1L702,226.9L703,228.8L704,229.5L705,228.3L706,228.7L707,228.0L708,228.3L709,229.5L710,232.6L711,235.1L712,233.5L713,232.0L714,233.7L715,233.5L716,230.9L717,232.8L718,233.6L719,231.6L720,231.2L721,235.5L722,239.3L723,240.4L724,243.8L725,249.9L726,253.5L727,257.8L728,260.8L729,265.2L730,269.9L731,274.7L732,275.6L733,281.5L734,282.9L735,285.0L736,283.2L737,277.8L738,276.8L739,277.3L740,279.3L741,279.6L742,283.3L743,282.4L744,283.8L745,280.8L746,282.0L747,280.7L748,281.5L749,280.7L750,280.7L751,283.3L752,286.1L753,282.8L754,280.9L755,281.5L756,282.5L757,279.7L758,279.6L759,281.9L760,283.7L761,286.5L762,282.7L763,277.5L764,275.4L765,273.3L766,270.4L767,272.5L768,277.1L769,280.9L770,286.3L771,284.3L772,285.6L773,287.1L774,286.0L775,290.0L776,290.8L777,292.5L778,297.0L779,298.5L780,300.4L781,302.9L782,304.9L783,301.8L784,304.3L785,305.2L786,303.5L787,300.8L788,301.8L789,304.2L790,306.2L791,307.4L792,309.5L793,308.9L794,309.1L795,304.4L796,308.5L797,307.7L798,308.0L799,308.7L800,312.1L800,345.0L336,345.0Z"/>
<path fill="#5cb4f2" d="M336,313.7L337,311.0L338,310.3L339,303.5L340,300.0L341,300.7L342,306.8L343,312.3L344,306.2L345,302.1L346,302.9L347,299.0L348,297.7L349,297.6L350,296.6L351,299.9L352,301.6L353,305.2L354,306.4L355,303.0L356,303.4L357,302.6L358,299.8L359,297.5L360,296.8L361,298.7L362,297.9L363,298.1L364,286.5L365,286.6L366,284.8L367,283.0L368,278.6L369,273.1L370,277.2L371,280.7L372,281.9L373,285.1L374,282.6L375,290.1L376,291.1L377,289.6L378,292.0L379,291.4L380,288.6L381,289.8L382,291.6L383,288.3L384,285.6L385,281.2L386,277.3L387,276.8L388,277.7L389,285.2L390,287.4L391,286.8L392,289.6L393,289.3L394,288.2L395,287.0L396,281.8L397,283.5L398,282.0L399,280.9L400,285.9L401,287.3L402,285.4L403,286.3L404,283.5L405,281.6L406,275.5L407,274.6L408,266.1L409,273.0L410,277.5L411,276.5L412,282.4L413,286.8L414,291.4L415,294.1L416,291.9L417,292.9L418,297.8L419,295.9L420,291.5L421,290.5L422,290.4L423,290.3L424,288.1L425,286.4L426,278.4L427,280.9L428,279.0L429,278.2L430,280.1L431,275.0L432,280.0L433,279.3L434,276.7L435,279.2L436,279.4L437,285.3L438,284.0L439,281.0L440,279.4L441,284.3L442,288.0L443,290.9L444,292.5L445,288.5L446,284.9L447,280.7L448,278.7L449,281.8L450,291.0L451,286.5L452,287.9L453,290.5L454,286.6L455,284.8L456,282.3L457,279.1L458,275.0L459,272.7L460,275.2L461,270.8L462,273.9L463,275.2L464,273.9L465,275.0L466,275.8L467,279.2L468,277.1L469,283.2L470,285.7L471,286.9L472,285.8L473,288.6L474,284.0L475,281.7L476,288.5L477,283.0L478,281.8L479,276.1L480,284.4L481,290.8L482,296.7L483,298.9L484,293.8L485,287.2L486,288.5L487,286.2L488,284.4L489,283.2L490,287.6L491,284.5L492,284.1L493,287.6L494,284.3L495,282.4L496,289.6L497,296.0L498,299.2L499,303.8L500,307.4L501,299.3L502,297.2L503,288.9L504,290.4L505,288.7L506,283.5L507,279.6L508,284.8L509,286.4L510,288.8L511,295.0L512,296.7L513,292.4L514,289.1L515,289.7L516,289.3L517,286.5L518,281.4L519,285.1L520,288.7L521,290.6L522,290.8L523,287.8L524,281.9L525,280.1L526,279.0L527,286.1L528,285.5L529,286.9L530,288.5L531,288.1L532,289.2L533,293.8L534,298.7L535,299.8L536,295.5L537,289.2L538,289.9L539,287.3L540,281.5L541,280.9L542,277.2L543,278.6L544,274.9L545,270.0L546,268.9L547,268.3L548,265.8L549,267.5L550,267.6L551,264.3L552,265.4L553,268.2L554,261.6L555,256.1L556,254.6L557,251.1L558,252.1L559,249.6L560,248.2L561,245.2L562,241.9L563,241.0L564,239.2L565,237.2L566,235.3L567,234.2L568,232.0L569,237.5L570,234.1L571,234.6L572,232.0L573,231.6L574,234.9L575,234.3L576,234.1L577,234.3L578,230.7L579,229.7L580,227.4L581,223.9L582,222.4L583,221.9L584,219.4L585,217.9L586,215.4L587,220.8L588,223.1L589,223.8L590,225.7L591,228.6L592,227.7L593,228.7L594,226.7L595,225.5L596,224.9L597,224.2L598,224.4L599,221.5L600,221.4L601,220.2L602,220.1L603,221.4L604,221.7L605,223.3L606,224.2L607,224.7L608,226.0L609,226.6L610,226.3L611,224.8L612,225.6L613,220.6L614,220.5L615,224.3L616,226.6L617,227.4L618,228.2L619,227.9L620,231.2L621,235.6L622,232.4L623,227.2L624,227.5L625,220.7L626,217.9L627,215.8L628,211.3L629,209.0L630,213.3L631,216.9L632,221.8L633,223.4L634,223.8L635,224.9L636,226.9L637,226.6L638,225.9L639,228.0L640,229.4L641,228.3L642,229.2L643,225.0L644,224.2L645,227.6L646,228.6L647,231.0L648,234.0L649,236.0L650,238.7L651,235.6L652,236.9L653,241.7L654,238.5L655,235.3L656,238.7L657,239.2L658,240.2L659,239.4L660,239.1L661,241.8L662,239.6L663,235.4L664,237.2L665,236.8L666,238.0L667,236.5L668,237.4L669,236.6L670,236.8L671,235.4L672,235.2L673,235.4L674,237.1L675,237.8L676,239.9L677,240.2L678,241.8L679,241.5L680,235.8L681,233.0L682,229.9L683,229.3L684,230.3L685,230.1L686,232.4L687,229.9L688,231.4L689,235.8L690,235.1L691,239.7L692,237.3L693,232.8L694,234.2L695,234.5L696,234.7L697,234.4L698,237.8L699,240.0L700,235.7L701,232.4L702,233.7L703,234.1L704,235.3L705,233.8L706,235.3L707,235.6L708,235.6L709,236.5L710,239.2L711,241.9L712,240.1L713,238.8L714,239.7L715,239.2L716,237.6L717,240.0L718,241.6L719,239.7L720,238.6L721,241.8L722,245.0L723,246.3L724,249.4L725,255.7L726,259.1L727,262.9L728,266.1L729,269.8L730,273.7L731,277.9L732,279.1L733,284.5L734,285.8L735,288.5L736,288.7L737,283.4L738,282.8L739,282.9L740,284.3L741,284.0L742,287.2L743,286.7L744,287.7L745,285.7L746,286.7L747,285.5L748,285.0L749,284.2L750,284.4L751,286.9L752,288.6L753,285.2L754,283.6L755,285.3L756,287.3L757,285.1L758,285.8L759,288.0L760,289.0L761,290.9L762,287.9L763,282.8L764,279.7L765,278.2L766,276.4L767,278.1L768,281.0L769,283.4L770,289.1L771,288.1L772,290.1L773,291.8L774,291.7L775,295.5L776,295.6L777,295.5L778,299.7L779,300.7L780,303.0L781,305.7L782,308.7L783,305.7L784,307.2L785,308.0L786,307.0L787,305.7L788,306.8L789,308.6L790,310.6L791,311.2L792,313.3L793,313.1L794,314.8L795,310.9L796,314.0L797,311.6L798,311.2L799,312.4L800,316.6L800,345.0L336,345.0Z"/>
<path fill="#ffc070" d="M336,314.7L337,312.2L338,311.4L339,305.2L340,301.9L341,302.3L342,308.5L343,314.6L344,308.4L345,304.0L346,304.6L347,300.7L348,299.4L349,299.2L350,297.9L351,301.1L352,302.6L353,306.1L354,307.2L355,303.6L356,304.2L357,304.0L358,301.7L359,299.2L360,298.5L361,300.7L362,300.1L363,299.8L364,287.4L365,287.5L366,286.6L367,285.7L368,281.5L369,276.0L370,280.0L371,283.2L372,284.1L373,287.1L374,284.9L375,292.8L376,293.9L377,291.7L378,293.8L379,293.5L380,290.4L381,291.6L382,293.4L383,290.5L384,288.1L385,283.6L386,280.0L387,279.7L388,281.1L389,288.2L390,290.5L391,289.8L392,293.2L393,292.3L394,290.8L395,289.2L396,284.5L397,286.4L398,284.8L399,283.7L400,289.1L401,290.4L402,288.3L403,288.6L404,285.2L405,283.4L406,279.4L407,280.5L408,272.4L409,278.1L410,281.3L411,279.3L412,284.7L413,288.2L414,292.5L415,296.2L416,295.0L417,296.2L418,301.3L419,299.3L420,294.1L421,292.8L422,292.2L423,292.0L424,290.2L425,289.3L426,281.6L427,283.6L428,282.1L429,280.8L430,282.0L431,276.5L432,282.0L433,281.1L434,278.4L435,281.5L436,282.0L437,287.7L438,286.4L439,283.0L440,281.2L441,285.7L442,289.6L443,292.7L444,294.4L445,290.4L446,286.9L447,283.0L448,280.9L449,284.0L450,292.8L451,287.7L452,289.5L453,291.9L454,288.0L455,286.2L456,284.2L457,280.6L458,276.6L459,274.5L460,277.9L461,273.4L462,276.1L463,276.6L464,275.8L465,277.7L466,278.7L467,282.1L468,280.0L469,286.0L470,288.2L471,289.1L472,287.9L473,290.4L474,286.1L475,284.0L476,291.3L477,285.7L478,284.3L479,278.6L480,286.7L481,292.8L482,298.7L483,301.4L484,297.4L485,290.7L486,291.5L487,288.8L488,286.9L489,285.6L490,289.4L491,286.0L492,285.2L493,289.2L494,286.5L495,284.5L496,291.6L497,297.6L498,301.1L499,305.9L500,309.9L501,301.6L502,299.4L503,290.7L504,291.8L505,289.7L506,284.6L507,280.9L508,286.2L509,287.7L510,290.3L511,296.7L512,298.1L513,293.9L514,291.1L515,291.7L516,290.9L517,288.1L518,283.4L519,286.9L520,290.2L521,292.4L522,293.1L523,289.7L524,283.3L525,281.4L526,280.7L527,288.1L528,287.5L529,289.0L530,290.7L531,290.8L532,291.5L533,295.6L534,299.8L535,301.0L536,296.9L537,290.8L538,291.2L539,288.9L540,283.4L541,283.0L542,278.7L543,280.0L544,276.3L545,272.0L546,271.1L547,270.7L548,267.5L549,268.8L550,268.6L551,265.5L552,266.6L553,269.2L554,263.0L555,257.6L556,256.5L557,252.8L558,253.8L559,251.2L560,249.2L561,246.1L562,243.1L563,242.8L564,240.7L565,238.6L566,237.0L567,236.8L568,234.6L569,240.1L570,235.9L571,237.1L572,235.4L573,234.9L574,237.6L575,237.0L576,236.5L577,236.8L578,233.9L579,233.3L580,231.2L581,227.7L582,225.7L583,224.7L584,222.5L585,220.9L586,217.5L587,222.8L588,225.4L589,226.1L590,227.8L591,230.7L592,229.6L593,230.5L594,228.8L595,227.6L596,227.0L597,226.1L598,226.1L599,223.7L600,223.5L601,222.7L602,222.3L603,224.2L604,224.3L605,225.8L606,226.1L607,226.8L608,228.5L609,228.9L610,228.3L611,227.1L612,228.4L613,223.7L614,222.7L615,226.1L616,227.9L617,229.5L618,231.0L619,230.6L620,233.2L621,237.2L622,234.7L623,230.2L624,230.4L625,223.3L626,220.4L627,218.8L628,214.1L629,212.0L630,216.0L631,219.3L632,223.7L633,225.5L634,226.1L635,227.0L636,228.9L637,229.1L638,229.0L639,230.9L640,232.0L641,231.0L642,232.0L643,228.0L644,227.1L645,230.3L646,231.0L647,233.4L648,237.1L649,239.0L650,242.0L651,239.3L652,241.0L653,245.5L654,241.3L655,237.8L656,241.3L657,242.4L658,243.8L659,242.5L660,241.9L661,244.4L662,242.8L663,238.9L664,241.0L665,239.7L666,240.5L667,238.7L668,239.6L669,238.4L670,238.4L671,237.3L672,237.4L673,238.4L674,240.0L675,240.2L676,242.5L677,243.5L678,245.2L679,244.3L680,238.9L681,236.5L682,233.4L683,232.5L684,233.4L685,232.4L686,235.0L687,232.6L688,233.0L689,236.3L690,235.8L691,241.3L692,239.8L693,235.6L694,236.9L695,236.7L696,237.4L697,236.8L698,239.3L699,241.0L700,237.5L701,235.0L702,236.7L703,236.9L704,238.4L705,236.9L706,238.6L707,238.6L708,238.8L709,239.7L710,241.8L711,244.4L712,242.6L713,242.0L714,243.0L715,242.4L716,240.6L717,243.6L718,245.6L719,243.4L720,241.7L721,245.0L722,247.9L723,248.9L724,251.6L725,257.4L726,260.7L727,264.8L728,268.5L729,271.9L730,275.8L731,280.6L732,281.9L733,287.4L734,288.7L735,290.9L736,290.4L737,285.1L738,285.0L739,285.4L740,286.8L741,286.5L742,289.4L743,288.3L744,289.1L745,287.1L746,288.8L747,287.7L748,288.2L749,287.3L750,286.7L751,288.9L752,291.0L753,288.2L754,286.5L755,288.0L756,289.3L757,286.8L758,287.6L759,289.4L760,290.0L761,292.2L762,289.8L763,284.9L764,281.6L765,280.0L766,278.4L767,280.2L768,282.7L769,285.2L770,290.7L771,290.1L772,292.3L773,294.2L774,293.8L775,297.2L776,297.5L777,297.7L778,302.2L779,302.9L780,304.9L781,307.7L782,310.9L783,308.1L784,309.2L785,310.2L786,309.2L787,307.8L788,308.4L789,310.4L790,312.5L791,312.9L792,314.6L793,314.5L794,316.9L795,313.8L796,317.7L797,315.3L798,314.5L799,315.1L800,318.7L800,345.0L336,345.0Z"/>
<path fill="#8b098b" d="M336,315.5L337,313.7L338,313.1L339,306.9L340,303.6L341,304.1L342,310.2L343,316.0L344,309.5L345,305.0L346,305.8L347,302.2L348,301.5L349,301.6L350,300.2L351,302.9L352,303.5L353,306.9L354,308.5L355,305.5L356,305.9L357,305.5L358,303.5L359,301.2L360,299.9L361,301.5L362,300.8L363,300.9L364,289.2L365,289.6L366,288.3L367,287.2L368,283.1L369,278.1L370,281.7L371,284.9L372,285.8L373,289.0L374,287.1L375,295.4L376,296.8L377,294.5L378,296.9L379,297.0L380,294.1L381,294.8L382,295.4L383,291.6L384,289.2L385,286.0L386,283.7L387,283.7L388,284.8L389,290.9L390,292.5L391,291.0L392,295.2L393,294.9L394,293.8L395,292.6L396,287.4L397,289.8L398,288.2L399,287.3L400,291.6L401,292.5L402,290.4L403,291.0L404,287.4L405,285.4L406,281.6L407,283.0L408,275.5L409,281.4L410,284.8L411,282.3L412,287.6L413,291.2L414,295.6L415,298.9L416,297.9L417,298.8L418,304.3L419,301.8L420,296.0L421,294.7L422,294.5L423,294.1L424,291.3L425,290.2L426,282.4L427,284.4L428,283.8L429,282.8L430,284.3L431,278.5L432,284.5L433,283.5L434,280.6L435,283.4L436,283.5L437,289.3L438,288.5L439,285.1L440,282.4L441,286.9L442,291.9L443,295.3L444,296.9L445,293.5L446,290.1L447,285.8L448,284.0L449,287.2L450,295.6L451,289.9L452,291.6L453,294.1L454,289.9L455,288.1L456,285.6L457,282.9L458,279.6L459,277.1L460,280.7L461,276.6L462,278.8L463,278.1L464,277.0L465,279.8L466,281.4L467,285.1L468,283.2L469,289.5L470,291.3L471,291.7L472,290.6L473,292.8L474,287.8L475,285.6L476,293.5L477,288.9L478,287.2L479,281.3L480,289.3L481,295.9L482,301.4L483,303.2L484,298.9L485,292.8L486,294.2L487,291.4L488,288.8L489,287.8L490,291.9L491,288.7L492,287.5L493,291.4L494,288.9L495,287.2L496,294.1L497,299.7L498,302.4L499,307.5L500,311.8L501,304.1L502,301.1L503,292.4L504,293.6L505,292.1L506,286.9L507,283.2L508,288.4L509,290.3L510,292.7L511,299.0L512,300.2L513,296.3L514,293.1L515,293.4L516,292.7L517,290.1L518,285.0L519,288.4L520,291.9L521,294.1L522,294.4L523,291.4L524,285.4L525,283.4L526,282.1L527,289.2L528,288.3L529,290.1L530,292.2L531,292.1L532,292.9L533,297.2L534,301.7L535,302.7L536,298.8L537,292.6L538,293.3L539,291.2L540,285.6L541,284.2L542,279.4L543,281.0L544,277.8L545,273.4L546,272.5L547,272.2L548,269.3L549,270.4L550,270.2L551,266.9L552,267.8L553,270.0L554,263.8L555,258.9L556,257.7L557,254.2L558,255.2L559,252.6L560,250.5L561,247.3L562,244.6L563,244.4L564,242.4L565,240.1L566,238.7L567,239.0L568,237.0L569,242.3L570,238.1L571,239.3L572,237.3L573,236.4L574,239.0L575,239.0L576,239.1L577,239.6L578,236.4L579,235.8L580,234.1L581,231.1L582,229.3L583,228.4L584,226.0L585,223.5L586,219.1L587,224.1L588,226.9L589,228.1L590,229.7L591,232.5L592,231.0L593,231.8L594,230.3L595,229.9L596,229.4L597,227.9L598,228.2L599,226.2L600,226.3L601,224.8L602,224.8L603,226.6L604,226.7L605,227.6L606,227.8L607,228.6L608,230.8L609,231.5L610,230.4L611,228.8L612,230.4L613,225.9L614,224.8L615,227.9L616,229.8L617,231.3L618,232.9L619,232.2L620,234.9L621,238.5L622,236.5L623,232.5L624,233.5L625,226.1L626,222.7L627,220.6L628,215.9L629,213.9L630,218.1L631,221.8L632,226.8L633,229.1L634,229.3L635,230.3L636,232.2L637,232.4L638,232.1L639,234.4L640,235.0L641,232.8L642,233.7L643,230.0L644,229.5L645,233.0L646,234.3L647,236.8L648,240.1L649,241.7L650,244.5L651,242.0L652,243.7L653,248.4L654,243.8L655,240.2L656,243.9L657,245.0L658,246.2L659,244.7L660,244.0L661,246.1L662,244.3L663,240.3L664,242.7L665,241.5L666,242.4L667,240.5L668,241.4L669,240.6L670,240.6L671,239.5L672,239.5L673,240.9L674,242.5L675,243.2L676,245.6L677,245.7L678,246.9L679,246.4L680,241.4L681,239.0L682,236.6L683,236.1L684,236.7L685,234.6L686,236.9L687,234.6L688,235.3L689,238.8L690,237.8L691,243.4L692,241.8L693,238.0L694,239.1L695,239.2L696,240.3L697,240.0L698,241.3L699,241.8L700,239.0L701,237.4L702,239.5L703,239.6L704,241.5L705,240.5L706,242.0L707,241.8L708,241.3L709,241.4L710,243.9L711,246.8L712,244.7L713,243.3L714,244.5L715,244.4L716,243.5L717,246.2L718,248.3L719,245.8L720,245.0L721,248.2L722,251.1L723,251.4L724,253.8L725,259.4L726,262.2L727,266.3L728,270.6L729,274.3L730,277.6L731,282.0L732,283.4L733,289.3L734,290.6L735,292.6L736,292.7L737,287.9L738,288.1L739,288.1L740,289.6L741,288.7L742,291.2L743,289.4L744,290.3L745,288.9L746,290.9L747,289.2L748,289.6L749,288.7L750,288.3L751,290.4L752,292.7L753,289.6L754,288.3L755,290.0L756,291.2L757,288.4L758,289.7L759,291.6L760,291.9L761,293.6L762,291.9L763,287.2L764,284.1L765,282.3L766,280.4L767,281.5L768,283.9L769,286.3L770,292.3L771,292.0L772,294.4L773,296.2L774,296.0L775,299.5L776,299.6L777,299.2L778,303.4L779,304.3L780,306.6L781,309.6L782,313.3L783,310.9L784,311.6L785,312.2L786,311.6L787,310.5L788,310.5L789,312.0L790,314.4L791,314.6L792,316.0L793,315.6L794,318.3L795,315.6L796,319.5L797,317.0L798,316.2L799,316.9L800,320.5L800,345.0L336,345.0Z"/>
<path fill="#ff12ee" d="M336,326.5L337,327.5L338,327.1L339,327.0L340,326.6L341,325.9L342,326.1L343,327.1L344,328.8L345,328.0L346,326.3L347,324.3L348,323.1L349,324.0L350,324.4L351,324.4L352,323.8L353,326.0L354,327.0L355,325.8L356,323.6L357,323.6L358,324.1L359,323.5L360,322.3L361,322.6L362,324.2L363,323.3L364,321.1L365,317.2L366,314.2L367,311.9L368,311.6L369,314.8L370,316.8L371,317.3L372,317.9L373,318.9L374,319.3L375,318.8L376,319.7L377,321.2L378,322.4L379,321.3L380,321.0L381,321.9L382,323.7L383,324.0L384,323.1L385,321.7L386,318.5L387,316.1L388,315.5L389,316.5L390,315.6L391,318.0L392,320.6L393,322.2L394,322.6L395,322.0L396,321.8L397,320.9L398,320.8L399,320.6L400,321.8L401,321.8L402,321.0L403,319.2L404,320.0L405,319.8L406,320.1L407,319.4L408,319.9L409,319.0L410,319.8L411,319.9L412,320.9L413,321.2L414,322.1L415,322.3L416,323.5L417,324.9L418,323.6L419,319.5L420,317.2L421,316.7L422,317.6L423,316.7L424,316.4L425,315.8L426,316.6L427,317.3L428,317.7L429,317.6L430,319.1L431,321.2L432,320.5L433,318.8L434,319.1L435,321.3L436,321.6L437,320.6L438,319.1L439,319.4L440,320.3L441,320.1L442,319.1L443,318.4L444,318.6L445,316.7L446,315.2L447,313.4L448,313.4L449,313.4L450,314.5L451,315.2L452,316.5L453,315.6L454,313.8L455,312.6L456,313.0L457,313.4L458,312.8L459,311.7L460,310.5L461,309.6L462,311.0L463,312.5L464,312.9L465,312.6L466,312.8L467,313.5L468,314.6L469,315.7L470,315.5L471,314.4L472,315.3L473,317.2L474,319.0L475,319.3L476,319.8L477,320.1L478,321.0L479,321.5L480,322.3L481,322.3L482,322.7L483,321.8L484,320.2L485,318.0L486,317.3L487,315.1L488,312.9L489,310.9L490,312.4L491,312.5L492,312.6L493,312.3L494,312.2L495,314.0L496,315.4L497,316.2L498,318.1L499,321.2L500,325.2L501,321.5L502,318.3L503,313.7L504,310.7L505,308.8L506,306.0L507,305.0L508,306.9L509,310.8L510,314.0L511,316.5L512,317.9L513,317.9L514,316.2L515,314.3L516,313.4L517,312.4L518,313.4L519,314.1L520,313.9L521,312.4L522,310.3L523,309.7L524,310.0L525,310.9L526,310.0L527,310.4L528,311.0L529,311.2L530,309.9L531,309.5L532,310.5L533,312.2L534,313.9L535,315.7L536,318.0L537,320.1L538,320.9L539,321.2L540,321.5L541,321.3L542,318.8L543,315.8L544,314.0L545,310.6L546,308.1L547,306.9L548,306.7L549,305.8L550,304.3L551,303.1L552,301.6L553,300.4L554,300.7L555,300.2L556,300.3L557,296.1L558,293.5L559,291.6L560,291.3L561,289.9L562,288.2L563,286.1L564,283.5L565,283.7L566,283.2L567,281.3L568,278.6L569,277.8L570,276.4L571,275.8L572,277.3L573,279.2L574,279.1L575,277.8L576,277.0L577,275.7L578,274.7L579,273.0L580,270.5L581,268.1L582,264.1L583,261.5L584,259.9L585,262.7L586,264.4L587,265.7L588,267.6L589,271.3L590,273.4L591,273.9L592,273.3L593,273.8L594,274.9L595,274.5L596,274.8L597,272.7L598,272.3L599,271.8L600,271.7L601,271.0L602,270.2L603,271.0L604,271.4L605,272.3L606,271.5L607,271.4L608,269.3L609,268.1L610,266.9L611,267.7L612,268.0L613,269.0L614,268.6L615,269.7L616,271.5L617,272.1L618,270.3L619,269.0L620,269.7L621,270.8L622,269.6L623,267.2L624,264.9L625,262.9L626,260.1L627,259.3L628,258.3L629,258.6L630,261.8L631,264.0L632,264.3L633,265.8L634,270.2L635,271.2L636,270.4L637,269.7L638,271.2L639,272.5L640,274.1L641,275.2L642,276.4L643,275.5L644,275.8L645,276.3L646,276.1L647,276.6L648,276.9L649,278.7L650,278.7L651,281.6L652,283.3L653,285.1L654,285.0L655,284.5L656,282.3L657,281.7L658,284.1L659,286.5L660,287.5L661,287.7L662,286.7L663,285.8L664,286.9L665,287.9L666,285.7L667,283.9L668,284.1L669,285.5L670,285.0L671,284.8L672,283.0L673,283.2L674,284.6L675,286.8L676,284.7L677,282.8L678,279.6L679,277.9L680,276.3L681,275.5L682,273.5L683,272.1L684,274.4L685,275.5L686,276.1L687,274.6L688,273.6L689,274.2L690,276.7L691,278.5L692,280.5L693,280.6L694,280.5L695,280.4L696,280.1L697,279.6L698,278.3L699,278.5L700,277.8L701,278.0L702,276.8L703,278.9L704,278.7L705,279.5L706,279.6L707,281.3L708,282.7L709,283.3L710,282.3L711,281.4L712,283.0L713,283.4L714,284.1L715,283.9L716,284.4L717,284.6L718,286.3L719,287.2L720,287.4L721,287.7L722,288.6L723,287.7L724,287.8L725,289.5L726,293.1L727,296.0L728,297.6L729,297.7L730,296.6L731,296.9L732,298.5L733,301.2L734,301.6L735,301.9L736,303.0L737,306.0L738,306.6L739,305.7L740,304.2L741,304.3L742,304.8L743,306.3L744,307.9L745,308.6L746,308.3L747,307.0L748,306.0L749,304.8L750,304.7L751,305.1L752,305.3L753,303.5L754,301.8L755,301.3L756,301.0L757,300.0L758,300.9L759,302.8L760,302.5L761,301.4L762,299.4L763,297.0L764,294.0L765,292.0L766,291.6L767,292.7L768,294.3L769,297.2L770,301.1L771,304.3L772,305.6L773,308.1L774,310.4L775,312.0L776,313.1L777,315.3L778,318.7L779,319.8L780,321.5L781,322.4L782,322.9L783,323.4L784,324.5L785,325.1L786,325.6L787,326.0L788,325.9L789,325.1L790,324.9L791,325.4L792,327.8L793,329.2L794,329.4L795,328.1L796,328.6L797,330.1L798,332.3L799,332.6L800,331.6L800,345.0L336,345.0Z"/>
<path fill="#44c62e" d="M336,337.3L337,336.9L338,337.2L339,337.8L340,337.7L341,337.6L342,337.6L343,337.9L344,337.9L345,337.6L346,336.7L347,335.8L348,335.6L349,335.0L350,334.3L351,333.7L352,333.4L353,333.5L354,333.5L355,333.9L356,334.2L357,334.8L358,334.1L359,334.1L360,333.6L361,333.5L362,333.3L363,333.7L364,333.3L365,332.7L366,333.0L367,334.2L368,334.8L369,334.4L370,334.0L371,333.6L372,333.6L373,333.3L374,333.4L375,333.3L376,333.9L377,333.9L378,334.1L379,334.0L380,334.1L381,334.1L382,333.7L383,333.3L384,333.3L385,333.5L386,333.5L387,333.2L388,333.4L389,333.7L390,334.1L391,334.5L392,334.7L393,334.4L394,333.6L395,333.6L396,333.4L397,333.8L398,333.7L399,333.8L400,334.1L401,334.7L402,334.6L403,334.4L404,334.2L405,334.2L406,333.9L407,333.7L408,333.5L409,333.8L410,334.0L411,333.5L412,333.1L413,332.7L414,332.7L415,332.7L416,333.7L417,334.0L418,333.6L419,333.3L420,333.6L421,333.9L422,333.7L423,333.8L424,333.7L425,333.9L426,334.0L427,334.0L428,333.6L429,333.3L430,333.4L431,333.7L432,334.2L433,334.2L434,334.0L435,334.2L436,334.1L437,334.0L438,333.6L439,333.6L440,333.6L441,334.1L442,334.4L443,333.9L444,333.2L445,332.8L446,333.3L447,334.0L448,334.3L449,334.0L450,333.7L451,333.9L452,334.2L453,334.3L454,333.7L455,333.4L456,333.8L457,334.2L458,334.3L459,334.0L460,333.3L461,333.1L462,333.5L463,333.5L464,332.9L465,333.3L466,333.8L467,334.1L468,334.0L469,333.9L470,333.4L471,333.0L472,332.9L473,333.1L474,333.1L475,333.3L476,333.4L477,333.5L478,333.7L479,334.2L480,334.7L481,334.6L482,334.2L483,333.7L484,333.8L485,334.3L486,334.3L487,334.1L488,333.7L489,333.7L490,333.6L491,333.6L492,333.8L493,333.5L494,333.3L495,333.1L496,333.2L497,333.4L498,333.2L499,333.3L500,333.0L501,333.2L502,333.4L503,334.3L504,334.7L505,334.9L506,334.4L507,334.5L508,334.2L509,333.9L510,333.1L511,333.1L512,333.5L513,333.7L514,333.5L515,333.1L516,333.1L517,333.1L518,332.8L519,333.2L520,333.0L521,332.9L522,332.7L523,333.5L524,333.7L525,333.4L526,333.2L527,333.2L528,333.4L529,333.4L530,333.1L531,332.7L532,332.9L533,333.4L534,334.0L535,333.9L536,333.1L537,332.2L538,332.8L539,333.4L540,333.6L541,333.6L542,333.6L543,333.3L544,332.7L545,332.5L546,332.7L547,333.2L548,333.1L549,332.9L550,332.8L551,333.1L552,333.0L553,332.7L554,332.4L555,332.2L556,332.9L557,333.8L558,334.0L559,333.1L560,332.7L561,332.8L562,333.4L563,333.8L564,334.3L565,333.7L566,332.8L567,332.2L568,332.3L569,332.4L570,332.8L571,333.1L572,333.3L573,332.9L574,332.8L575,333.2L576,332.9L577,332.6L578,332.3L579,332.6L580,332.4L581,332.5L582,333.2L583,333.5L584,333.2L585,332.4L586,332.5L587,332.6L588,332.7L589,332.8L590,333.0L591,332.9L592,332.6L593,332.9L594,333.0L595,333.1L596,333.0L597,332.9L598,332.9L599,332.8L600,333.1L601,333.2L602,332.8L603,332.3L604,332.6L605,333.1L606,332.9L607,332.9L608,332.8L609,332.7L610,332.7L611,333.2L612,333.0L613,332.4L614,332.5L615,332.8L616,332.9L617,333.2L618,333.5L619,332.7L620,332.7L621,333.4L622,333.9L623,333.8L624,333.8L625,333.8L626,333.3L627,333.1L628,332.9L629,333.2L630,333.6L631,333.7L632,333.4L633,332.9L634,333.1L635,333.6L636,333.5L637,333.3L638,333.6L639,333.9L640,333.4L641,332.8L642,332.7L643,333.2L644,333.1L645,332.6L646,332.3L647,332.9L648,332.8L649,333.4L650,333.4L651,333.6L652,333.6L653,333.8L654,333.7L655,333.2L656,333.0L657,332.7L658,332.6L659,332.5L660,332.6L661,332.7L662,333.0L663,332.3L664,330.5L665,330.1L666,332.2L667,332.5L668,332.6L669,332.6L670,333.3L671,333.2L672,332.7L673,332.2L674,332.9L675,333.0L676,333.1L677,333.2L678,333.5L679,333.3L680,332.8L681,332.5L682,332.7L683,332.6L684,332.6L685,332.7L686,332.9L687,332.7L688,332.6L689,333.0L690,332.8L691,332.3L692,332.5L693,333.0L694,332.8L695,332.5L696,333.0L697,333.2L698,332.8L699,332.3L700,332.9L701,333.1L702,333.1L703,333.1L704,333.4L705,333.2L706,333.0L707,333.0L708,333.2L709,333.2L710,333.2L711,332.5L712,332.4L713,332.6L714,332.4L715,332.1L716,332.4L717,332.9L718,332.2L719,331.8L720,331.7L721,332.2L722,331.9L723,332.0L724,332.5L725,333.2L726,336.9L727,337.2L728,337.3L729,337.3L730,337.3L731,337.2L732,337.1L733,337.1L734,337.1L735,337.1L736,337.0L737,336.9L738,336.6L739,336.7L740,336.8L741,336.9L742,336.6L743,336.4L744,336.4L745,336.7L746,336.9L747,337.2L748,337.3L749,337.4L750,336.9L751,337.1L752,337.0L753,337.1L754,337.2L755,337.4L756,337.1L757,336.8L758,337.0L759,337.4L760,337.5L761,337.2L762,336.8L763,336.7L764,336.7L765,336.7L766,337.1L767,337.3L768,337.3L769,336.9L770,336.9L771,336.8L772,336.7L773,336.6L774,336.9L775,337.4L776,337.5L777,337.1L778,336.9L779,336.9L780,337.1L781,337.4L782,337.2L783,337.3L784,337.2L785,337.2L786,336.7L787,336.7L788,336.7L789,336.7L790,336.6L791,336.8L792,336.9L793,337.1L794,336.9L795,337.0L796,337.0L797,337.2L798,336.7L799,336.7L800,336.7L800,345.0L336,345.0Z"/>
<path fill="#f2a10f" d="M336,341.7L337,342.3L338,342.5L339,342.4L340,342.3L341,343.0L342,343.0L343,342.9L344,342.6L345,342.6L346,341.7L347,340.5L348,339.6L349,338.7L350,338.0L351,338.1L352,338.3L353,338.0L354,337.6L355,337.5L356,337.6L357,337.9L358,338.0L359,338.1L360,337.9L361,337.7L362,337.4L363,337.4L364,337.8L365,338.1L366,337.9L367,337.3L368,337.0L369,337.0L370,337.5L371,337.9L372,338.0L373,337.7L374,337.6L375,337.8L376,337.6L377,337.6L378,337.6L379,337.6L380,337.2L381,337.4L382,337.8L383,338.0L384,337.9L385,337.6L386,338.1L387,338.5L388,338.4L389,337.9L390,337.9L391,338.1L392,337.8L393,337.6L394,337.7L395,337.9L396,337.8L397,337.7L398,337.5L399,337.1L400,337.0L401,337.5L402,338.1L403,338.3L404,338.5L405,338.5L406,338.0L407,337.6L408,337.3L409,337.3L410,337.4L411,337.7L412,337.9L413,337.6L414,337.5L415,337.4L416,337.9L417,337.8L418,337.7L419,337.6L420,337.6L421,337.8L422,337.6L423,337.6L424,337.5L425,338.0L426,338.3L427,338.2L428,338.1L429,338.1L430,338.0L431,337.5L432,337.4L433,337.6L434,337.6L435,337.2L436,337.1L437,337.3L438,337.6L439,337.4L440,337.2L441,337.2L442,337.6L443,338.0L444,337.7L445,337.4L446,337.5L447,338.1L448,338.1L449,338.0L450,337.7L451,337.8L452,337.8L453,337.8L454,337.7L455,337.6L456,337.5L457,337.3L458,337.2L459,337.2L460,337.4L461,337.4L462,337.5L463,337.7L464,337.7L465,337.7L466,337.7L467,337.7L468,337.6L469,337.7L470,337.4L471,337.5L472,337.5L473,337.0L474,336.8L475,336.9L476,337.7L477,337.5L478,337.6L479,337.6L480,337.7L481,337.4L482,337.3L483,337.7L484,338.2L485,338.5L486,338.3L487,338.1L488,338.1L489,338.2L490,337.9L491,337.8L492,337.7L493,337.6L494,337.4L495,337.6L496,337.9L497,338.0L498,337.9L499,337.6L500,337.5L501,337.5L502,337.7L503,337.9L504,337.9L505,337.5L506,337.3L507,337.3L508,337.0L509,337.2L510,337.2L511,337.6L512,337.7L513,337.8L514,337.4L515,336.9L516,336.9L517,337.4L518,337.3L519,336.8L520,336.8L521,337.2L522,337.7L523,337.7L524,337.7L525,337.3L526,337.0L527,336.5L528,336.0L529,336.1L530,336.8L531,337.1L532,337.0L533,336.7L534,336.9L535,336.9L536,337.4L537,336.8L538,336.8L539,336.8L540,337.1L541,336.6L542,336.4L543,336.5L544,336.5L545,336.1L546,335.7L547,335.7L548,336.2L549,336.7L550,337.1L551,337.0L552,336.4L553,335.8L554,335.5L555,335.7L556,336.1L557,336.3L558,336.2L559,336.0L560,336.2L561,336.5L562,336.2L563,335.8L564,335.5L565,335.9L566,336.1L567,336.0L568,336.1L569,336.2L570,336.2L571,335.8L572,335.8L573,335.8L574,335.8L575,336.1L576,336.1L577,336.0L578,335.8L579,335.9L580,336.1L581,336.4L582,336.3L583,336.8L584,336.7L585,336.2L586,335.5L587,335.8L588,336.6L589,337.0L590,336.9L591,336.8L592,336.3L593,336.0L594,335.5L595,335.8L596,336.2L597,336.5L598,336.4L599,336.0L600,335.9L601,335.9L602,336.3L603,336.5L604,336.5L605,336.4L606,336.5L607,336.3L608,336.3L609,336.3L610,336.3L611,336.0L612,336.1L613,336.1L614,336.2L615,336.4L616,336.4L617,335.8L618,335.7L619,336.0L620,336.5L621,336.4L622,336.3L623,336.1L624,335.7L625,335.6L626,335.7L627,335.8L628,335.6L629,335.6L630,335.9L631,336.0L632,336.3L633,336.5L634,336.6L635,336.0L636,335.6L637,335.6L638,335.9L639,336.0L640,335.9L641,335.7L642,335.7L643,335.8L644,336.0L645,335.9L646,336.1L647,336.3L648,336.5L649,336.4L650,336.3L651,336.1L652,336.3L653,336.4L654,336.5L655,336.1L656,335.7L657,335.3L658,335.4L659,335.5L660,335.8L661,335.9L662,336.0L663,336.1L664,336.3L665,336.2L666,336.3L667,336.7L668,336.7L669,336.1L670,336.2L671,336.5L672,336.1L673,335.6L674,335.6L675,336.2L676,336.0L677,335.8L678,336.1L679,336.7L680,336.5L681,336.1L682,335.8L683,336.1L684,335.6L685,335.6L686,335.8L687,336.5L688,336.1L689,335.9L690,335.6L691,335.8L692,336.0L693,336.6L694,336.7L695,336.2L696,335.7L697,335.8L698,336.4L699,336.5L700,336.3L701,336.0L702,336.1L703,336.2L704,336.1L705,335.8L706,336.1L707,336.4L708,336.6L709,336.1L710,335.8L711,335.7L712,335.9L713,336.0L714,335.8L715,335.5L716,335.3L717,335.7L718,335.9L719,335.9L720,336.0L721,336.0L722,335.5L723,334.9L724,335.3L725,335.9L726,340.6L727,340.6L728,340.6L729,340.6L730,340.6L731,340.6L732,340.6L733,340.6L734,340.6L735,340.6L736,340.6L737,340.6L738,340.6L739,340.6L740,340.6L741,340.6L742,340.6L743,340.6L744,340.6L745,340.6L746,340.6L747,340.6L748,340.6L749,340.6L750,340.6L751,340.6L752,340.6L753,340.6L754,340.6L755,340.6L756,340.6L757,340.6L758,340.6L759,340.6L760,340.6L761,340.6L762,340.6L763,340.6L764,340.6L765,340.6L766,340.6L767,340.6L768,340.6L769,340.6L770,340.6L771,340.6L772,340.6L773,340.6L774,340.6L775,340.6L776,340.6L777,340.6L778,340.6L779,340.6L780,340.6L781,340.6L782,340.6L783,340.6L784,340.6L785,340.6L786,340.6L787,340.6L788,340.6L789,340.6L790,340.6L791,340.6L792,340.6L793,340.6L794,340.6L795,340.6L796,340.6L797,340.6L798,340.6L799,340.6L800,340.6L800,345.0L336,345.0Z"/>
<path fill="#6fd98a" d="M336,342.3L337,342.3L338,342.3L339,342.3L340,342.3L341,342.3L342,342.3L343,342.3L344,342.3L345,342.3L346,342.3L347,342.3L348,342.3L349,342.3L350,342.3L351,342.3L352,342.3L353,342.3L354,342.3L355,342.3L356,342.3L357,342.3L358,342.3L359,342.3L360,342.3L361,342.3L362,342.3L363,342.3L364,342.3L365,342.3L366,342.3L367,342.3L368,342.3L369,342.3L370,342.3L371,342.3L372,342.3L373,342.3L374,342.3L375,342.3L376,342.3L377,342.3L378,342.3L379,342.3L380,342.3L381,342.3L382,342.3L383,342.3L384,342.3L385,342.3L386,342.3L387,342.3L388,342.3L389,342.3L390,342.3L391,342.3L392,342.3L393,342.3L394,342.3L395,342.3L396,342.3L397,342.3L398,342.3L399,342.3L400,342.3L401,342.3L402,342.3L403,342.3L404,342.3L405,342.3L406,342.3L407,342.3L408,342.3L409,342.3L410,342.3L411,342.3L412,342.3L413,342.3L414,342.3L415,342.3L416,342.3L417,342.3L418,342.3L419,342.3L420,342.3L421,342.3L422,342.3L423,342.3L424,342.3L425,342.3L426,342.3L427,342.3L428,342.3L429,342.3L430,342.3L431,342.3L432,342.3L433,342.3L434,342.3L435,342.3L436,342.3L437,342.3L438,342.3L439,342.3L440,342.3L441,342.3L442,342.3L443,342.3L444,342.3L445,342.3L446,342.3L447,342.3L448,342.3L449,342.3L450,342.3L451,342.3L452,342.3L453,342.3L454,342.3L455,342.3L456,342.3L457,342.3L458,342.3L459,342.3L460,342.3L461,342.3L462,342.3L463,342.3L464,342.3L465,342.3L466,342.3L467,342.3L468,342.3L469,342.3L470,342.3L471,342.3L472,342.3L473,342.3L474,342.3L475,342.3L476,342.3L477,342.3L478,342.3L479,342.3L480,342.3L481,342.3L482,342.3L483,342.3L484,342.3L485,342.3L486,342.3L487,342.3L488,342.3L489,342.3L490,342.3L491,342.3L492,342.3L493,342.3L494,342.3L495,342.3L496,342.3L497,342.3L498,342.3L499,342.3L500,342.3L501,342.3L502,342.3L503,342.3L504,342.2L505,342.2L506,342.2L507,342.2L508,342.2L509,342.2L510,342.2L511,342.2L512,342.1L513,342.1L514,342.1L515,342.1L516,342.1L517,342.1L518,342.1L519,342.0L520,342.0L521,342.0L522,342.0L523,342.0L524,342.0L525,342.0L526,342.0L527,341.9L528,341.9L529,341.9L530,341.9L531,341.9L532,341.9L533,341.9L534,341.8L535,341.8L536,341.8L537,341.8L538,341.8L539,341.8L540,341.8L541,341.8L542,341.7L543,341.7L544,341.7L545,341.7L546,341.7L547,341.7L548,341.7L549,341.6L550,341.6L551,341.6L552,341.6L553,341.6L554,341.6L555,341.6L556,341.6L557,341.5L558,341.5L559,341.5L560,341.5L561,341.5L562,341.5L563,341.5L564,341.5L565,341.5L566,341.5L567,341.5L568,341.5L569,341.5L570,341.5L571,341.5L572,341.5L573,341.5L574,341.5L575,341.5L576,341.5L577,341.5L578,341.5L579,341.5L580,341.5L581,341.5L582,341.5L583,341.5L584,341.5L585,341.5L586,341.5L587,341.5L588,341.5L589,341.5L590,341.5L591,341.5L592,341.5L593,341.5L594,341.5L595,341.5L596,341.5L597,341.5L598,341.5L599,341.5L600,341.5L601,341.5L602,341.5L603,341.5L604,341.5L605,341.5L606,341.5L607,341.5L608,341.5L609,341.5L610,341.5L611,341.5L612,341.5L613,341.5L614,341.5L615,341.5L616,341.5L617,341.5L618,341.5L619,341.5L620,341.5L621,341.5L622,341.5L623,341.5L624,341.5L625,341.5L626,341.5L627,341.5L628,341.5L629,341.5L630,341.5L631,341.5L632,341.5L633,341.5L634,341.5L635,341.5L636,341.5L637,341.5L638,341.5L639,341.5L640,341.5L641,341.5L642,341.5L643,341.5L644,341.5L645,341.5L646,341.5L647,341.5L648,341.5L649,341.5L650,341.5L651,341.5L652,341.5L653,341.5L654,341.5L655,341.5L656,341.5L657,341.5L658,341.5L659,341.5L660,341.5L661,341.5L662,341.5L663,341.5L664,341.5L665,341.5L666,341.5L667,341.5L668,341.5L669,341.5L670,341.5L671,341.5L672,341.5L673,341.5L674,341.5L675,341.5L676,341.5L677,341.5L678,341.5L679,341.5L680,341.5L681,341.5L682,341.5L683,341.5L684,341.5L685,341.5L686,341.5L687,341.5L688,341.5L689,341.5L690,341.5L691,341.5L692,341.5L693,341.5L694,341.5L695,341.5L696,341.5L697,341.5L698,341.5L699,341.5L700,341.5L701,341.5L702,341.5L703,341.5L704,341.5L705,341.5L706,341.5L707,341.5L708,341.5L709,341.5L710,341.5L711,341.5L712,341.5L713,341.5L714,341.5L715,341.5L716,341.5L717,341.5L718,341.5L719,341.5L720,341.5L721,341.5L722,341.5L723,341.5L724,341.5L725,341.5L726,340.6L727,340.6L728,340.6L729,340.6L730,340.6L731,340.6L732,340.6L733,340.6L734,340.6L735,340.6L736,340.6L737,340.6L738,340.6L739,340.6L740,340.6L741,340.6L742,340.6L743,340.6L744,340.6L745,340.6L746,340.6L747,340.6L748,340.6L749,340.6L750,340.6L751,340.6L752,340.6L753,340.6L754,340.6L755,340.6L756,340.6L757,340.6L758,340.6L759,340.6L760,340.6L761,340.6L762,340.6L763,340.6L764,340.6L765,340.6L766,340.6L767,340.6L768,340.6L769,340.6L770,340.6L771,340.6L772,340.6L773,340.6L774,340.6L775,340.6L776,340.6L777,340.6L778,340.6L779,340.6L780,340.6L781,340.6L782,340.6L783,340.6L784,340.6L785,340.6L786,340.6L787,340.6L788,340.6L789,340.6L790,340.6L791,340.6L792,340.6L793,340.6L794,340.6L795,340.6L796,340.6L797,340.6L798,340.6L799,340.6L800,340.6L800,345.0L336,345.0Z"/>
<path fill="#52dcd4" d="M545,341.5H726V345H545Z"/>
<path fill="#a4dc46" d="M726,340.6H801V345H726Z"/>
<path fill="#49cfc0" d="M336,343.3L337,343.3L338,343.3L339,343.3L340,343.3L341,343.3L342,343.3L343,343.3L344,343.3L345,343.3L346,343.3L347,343.3L348,343.3L349,343.3L350,343.3L351,343.3L352,343.3L353,343.3L354,343.3L355,343.3L356,343.3L357,343.3L358,343.3L359,343.3L360,343.3L361,343.3L362,343.3L363,343.3L364,343.3L365,343.3L366,343.3L367,343.3L368,343.3L369,343.3L370,343.3L371,343.3L372,343.3L373,343.3L374,343.3L375,343.3L376,343.3L377,343.3L378,343.3L379,343.3L380,343.3L381,343.3L382,343.3L383,343.3L384,343.3L385,343.3L386,343.3L387,343.3L388,343.3L389,343.3L390,343.3L391,343.3L392,343.3L393,343.3L394,343.3L395,343.3L396,343.3L397,343.3L398,343.3L399,343.3L400,343.3L401,343.3L402,343.3L403,343.3L404,343.3L405,343.3L406,343.3L407,343.3L408,343.3L409,343.3L410,343.3L411,343.3L412,343.3L413,343.3L414,343.3L415,343.3L416,343.3L417,343.3L418,343.3L419,343.3L420,343.3L421,343.3L422,343.3L423,343.3L424,343.3L425,343.3L426,343.3L427,343.3L428,343.3L429,343.3L430,343.3L431,343.3L432,343.3L433,343.3L434,343.3L435,343.3L436,343.3L437,343.3L438,343.3L439,343.3L440,343.3L441,343.3L442,343.3L443,343.3L444,343.3L445,343.3L446,343.3L447,343.3L448,343.3L449,343.3L450,343.3L451,343.3L452,343.3L453,343.3L454,343.3L455,343.3L456,343.3L457,343.3L458,343.3L459,343.3L460,343.3L461,343.3L462,343.3L463,343.3L464,343.3L465,343.3L466,343.3L467,343.3L468,343.3L469,343.3L470,343.3L471,343.3L472,343.3L473,343.3L474,343.3L475,343.3L476,343.3L477,343.3L478,343.3L479,343.3L480,343.3L481,343.3L482,343.3L483,343.3L484,343.3L485,343.3L486,343.3L487,343.3L488,343.3L489,343.3L490,343.3L491,343.3L492,343.3L493,343.3L494,343.3L495,343.3L496,343.3L497,343.3L498,343.3L499,343.3L500,343.3L501,343.3L502,343.3L503,343.3L504,343.3L505,343.3L506,343.3L507,343.3L508,343.3L509,343.3L510,343.3L511,343.3L512,343.3L513,343.3L514,343.3L515,343.3L516,343.3L517,343.3L518,343.3L519,343.3L520,343.3L521,343.3L522,343.3L523,343.3L524,343.3L525,343.3L526,343.3L527,343.3L528,343.3L529,343.3L530,343.3L531,343.3L532,343.3L533,343.3L534,343.3L535,343.3L536,343.3L537,343.3L538,343.3L539,343.3L540,343.3L541,343.3L542,343.3L543,343.3L544,343.3L545,343.3L546,343.3L547,343.3L548,343.3L549,343.3L550,343.3L551,343.3L552,343.3L553,343.3L554,343.3L555,343.3L556,343.3L557,343.3L558,343.3L559,343.3L560,343.3L561,343.3L562,343.3L563,343.3L564,343.3L565,343.3L566,343.3L567,343.3L568,343.3L569,343.3L570,343.3L571,343.3L572,343.3L573,343.3L574,343.3L575,343.3L576,343.3L577,343.3L578,343.3L579,343.3L580,343.3L581,343.3L582,343.3L583,343.3L584,343.3L585,343.3L586,343.3L587,343.3L588,343.3L589,343.3L590,343.3L591,343.3L592,343.3L593,343.3L594,343.3L595,343.3L596,343.3L597,343.3L598,343.3L599,343.3L600,343.3L601,343.3L602,343.3L603,343.3L604,343.3L605,343.3L606,343.3L607,343.3L608,343.3L609,343.3L610,343.3L611,343.3L612,343.3L613,343.3L614,343.3L615,343.3L616,343.3L617,343.3L618,343.3L619,343.3L620,343.3L621,343.3L622,343.3L623,343.3L624,343.3L625,343.3L626,343.3L627,343.3L628,343.3L629,343.3L630,343.3L631,343.3L632,343.3L633,343.3L634,343.3L635,343.3L636,343.3L637,343.3L638,343.3L639,343.3L640,343.3L641,343.3L642,343.3L643,343.3L644,343.3L645,343.3L646,343.3L647,343.3L648,343.3L649,343.3L650,343.3L651,343.3L652,343.3L653,343.3L654,343.3L655,343.3L656,343.3L657,343.3L658,343.3L659,343.3L660,343.3L661,343.3L662,343.3L663,343.3L664,343.3L665,343.3L666,343.3L667,343.3L668,343.3L669,343.3L670,343.3L671,343.3L672,343.3L673,343.3L674,343.3L675,343.3L676,343.3L677,343.3L678,343.3L679,343.3L680,343.3L681,343.3L682,343.3L683,343.3L684,343.3L685,343.3L686,343.3L687,343.3L688,343.3L689,343.3L690,343.3L691,343.3L692,343.3L693,343.3L694,343.3L695,343.3L696,343.3L697,343.3L698,343.3L699,343.3L700,343.3L701,343.3L702,343.3L703,343.3L704,343.3L705,343.3L706,343.3L707,343.3L708,343.3L709,343.3L710,343.3L711,343.3L712,343.3L713,343.3L714,343.3L715,343.3L716,343.3L717,343.3L718,343.3L719,343.3L720,343.3L721,343.3L722,343.3L723,343.3L724,343.3L725,343.3L726,343.1L727,343.1L728,343.1L729,343.1L730,343.1L731,343.1L732,343.1L733,343.1L734,343.1L735,343.1L736,343.1L737,343.1L738,343.1L739,343.1L740,343.1L741,343.1L742,343.1L743,343.1L744,343.1L745,343.1L746,343.1L747,343.1L748,343.1L749,343.1L750,343.1L751,343.1L752,343.1L753,343.1L754,343.1L755,343.1L756,343.1L757,343.1L758,343.1L759,343.1L760,343.1L761,343.1L762,343.1L763,343.1L764,343.1L765,343.1L766,343.1L767,343.1L768,343.1L769,343.1L770,343.1L771,343.1L772,343.1L773,343.1L774,343.1L775,343.1L776,343.1L777,343.1L778,343.1L779,343.1L780,343.1L781,343.1L782,343.1L783,343.1L784,343.1L785,343.1L786,343.1L787,343.1L788,343.1L789,343.1L790,343.1L791,343.1L792,343.1L793,343.1L794,343.1L795,343.1L796,343.1L797,343.1L798,343.1L799,343.1L800,343.1L800,345.0L336,345.0Z"/>
<path d="M335.5,160 V348" stroke="#4a4a4a" stroke-width="1" fill="none"/>
<path d="M332,344.4 H800" stroke="#2a2a2a" stroke-width="1.4" fill="none"/>
<path d="M335.5,155.5 L339.5,161.5 L331.5,161.5 Z" fill="#8b1a2a"/>
<path d="M364.5,345 V347" stroke="#b08a8a" stroke-width="1" fill="none"/>
<path d="M404.5,345 V347" stroke="#b08a8a" stroke-width="1" fill="none"/>
<path d="M444.5,345 V347" stroke="#b08a8a" stroke-width="1" fill="none"/>
<path d="M484.5,345 V347" stroke="#b08a8a" stroke-width="1" fill="none"/>
<path d="M524.5,345 V347" stroke="#b08a8a" stroke-width="1" fill="none"/>
<path d="M564.5,345 V347" stroke="#b08a8a" stroke-width="1" fill="none"/>
<path d="M604.5,345 V347" stroke="#b08a8a" stroke-width="1" fill="none"/>
<path d="M644.5,345 V347" stroke="#b08a8a" stroke-width="1" fill="none"/>
<path d="M684.5,345 V347" stroke="#b08a8a" stroke-width="1" fill="none"/>
<path d="M724.5,345 V347" stroke="#b08a8a" stroke-width="1" fill="none"/>
<path d="M764.5,345 V347" stroke="#b08a8a" stroke-width="1" fill="none"/>
</svg>

<div class="ax" style="left:313.6px;top:177px">30</div>
<div class="ax" style="left:313.6px;top:231px">20</div>
<div class="ax" style="left:313.6px;top:285px">10</div>
<div class="ax" style="left:320.4px;top:339px">0</div>
<div class="ax" style="left:357.8px;top:350px">20</div>
<div class="ax" style="left:437.8px;top:350px">00</div>
<div class="ax" style="left:517.8px;top:350px">04</div>
<div class="ax" style="left:597.8px;top:350px">08</div>
<div class="ax" style="left:677.8px;top:350px">12</div>
<div class="ax" style="left:757.8px;top:350px">16</div>
<div class="ax" style="left:236.8px;top:247.6px;width:70px;text-align:center;transform:rotate(-90deg);transform-origin:center center;font-weight:normal;font-size:12px;-webkit-text-stroke:0.3px #222;color:#222">CPU cores</div>

<!-- table -->
<div class="abs" style="left:584px;top:376px;width:156px;height:18px;background:#e7e7e7"></div>
<div class="abs" style="left:272px;top:376px;width:312px;height:18px;background:#fafafa"></div>
<div class="abs" style="left:258px;top:394px;width:482px;height:1px;background:#a2a2a2"></div>
<div class="abs" style="left:258px;top:395px;width:482px;height:6px;background:linear-gradient(#e6e6e6,#f3f3f3)"></div>
<div class="th" style="left:277px">Utilization in CPU cores:</div>
<div class="th" style="left:440px;width:128px;text-align:right">Avrg</div>
<div class="th" style="left:600px;width:124px;text-align:right">Max</div>

<div class="row" style="top:400px"><div class="sw" style="background:#ff33ff"></div><div class="nm">aix08</div><div class="v1">5.65</div><div class="v2">13.76</div></div>
<div class="row" style="top:415px"><div class="sw" style="background:#992d99"></div><div class="nm">aix09</div><div class="v1">5.42</div><div class="v2">8.77</div></div>
<div class="row" style="top:430px"><div class="sw" style="background:#992d2d"></div><div class="nm">aix14</div><div class="v1">1.78</div><div class="v2">2.77</div></div>
<div class="row" style="top:445px"><div class="sw" style="background:#2d2daa"></div><div class="nm">aix11</div><div class="v1">0.95</div><div class="v2">2.23</div></div>
<div class="row" style="top:460px"><div class="sw" style="background:#66c2ff"></div><div class="nm">aix12</div><div class="v1">0.73</div><div class="v2">1.79</div></div>
<div class="row" style="top:475px"><div class="sw" style="background:#ffb340"></div><div class="nm">aix05</div><div class="v1">0.52</div><div class="v2">1.37</div></div>
<div class="row" style="top:490px"><div class="sw" style="background:#ffd94d"></div><div class="nm">aix10</div><div class="v1">0.49</div><div class="v2">1.06</div></div>
<div class="row" style="top:505px"><div class="sw" style="background:#40f040"></div><div class="nm">aix06</div><div class="v1">0.55</div><div class="v2">0.94</div></div>
<div class="vl" style="left:272px;top:376px;height:143px"></div>
<div class="vl" style="left:428px;top:376px;height:143px"></div>
<div class="vl" style="left:584px;top:376px;height:143px"></div>
<div class="vl" style="left:739px;top:376px;height:143px"></div>


<!-- icons overlay -->
<svg class="abs" style="left:0;top:0;pointer-events:none" width="800" height="519" viewBox="0 0 800 519">
<!-- sort-list icon -->
<g fill="#5b8491" stroke="#dcecf0" stroke-width="1.2" paint-order="stroke">
<rect x="242" y="66" width="19" height="6.6" rx="3.2"/>
<rect x="242" y="74.6" width="19" height="6.6" rx="3.2"/>
<rect x="242" y="83.8" width="19" height="6.6" rx="3.2"/>
<path d="M237.3,66.5 H240 V90.6 L231.8,80.3 H237.3 Z"/>
</g>
<!-- mouse cursor -->
<path d="M372.2,161.3 L372.2,179.3 L375.9,175.7 L378.5,180.9 L381,179.7 L378.7,174.4 L383.8,174 Z" fill="#fff" stroke="#000" stroke-width="1.25" stroke-linejoin="miter"/>
<!-- move icon -->
<g fill="#7d7d7d">
<rect x="264.2" y="380.4" width="2.6" height="9.6"/>
<rect x="260.7" y="383.9" width="9.6" height="2.6"/>
<path d="M265.5,378 L268.4,381.3 L262.6,381.3 Z"/>
<path d="M265.5,392.4 L268.4,389.1 L262.6,389.1 Z"/>
<path d="M258.6,385.2 L261.9,382.3 L261.9,388.1 Z"/>
<path d="M272.4,385.2 L269.1,382.3 L269.1,388.1 Z"/>
</g>
<!-- sort chevrons -->
<g fill="none" stroke="#2d5f8a" stroke-width="1.6">
<path d="M415.3,381.8 L420.3,376.6 L425.3,381.8" stroke="#c9e3f5" stroke-width="3.4"/>
<path d="M415.3,385.2 L420.3,390.4 L425.3,385.2" stroke="#c9e3f5" stroke-width="3.4"/>
<path d="M415.3,381.8 L420.3,376.6 L425.3,381.8"/>
<path d="M415.3,385.2 L420.3,390.4 L425.3,385.2"/>
<path d="M570.4,381.8 L575.8,376.6 L581.2,381.8" stroke="#c9e3f5" stroke-width="3.4"/>
<path d="M570.4,385.2 L575.8,390.4 L581.2,385.2" stroke="#c9e3f5" stroke-width="3.4"/>
<path d="M570.4,381.8 L575.8,376.6 L581.2,381.8"/>
<path d="M570.4,385.2 L575.8,390.4 L581.2,385.2"/>
<path d="M726.4,381.8 L731.9,376.6 L737.3,381.8" stroke="#b5dcf5" stroke-width="3.4"/>
<path d="M726.4,381.8 L731.9,376.6 L737.3,381.8"/>
</g>
<path d="M726.2,385.3 H737.5 L731.9,390.8 Z" fill="#1e5a96" stroke="#b5dcf5" stroke-width="0.8" paint-order="stroke"/>
</svg>

<!-- watermark -->
<div class="abs" style="left:548px;top:464px;width:242px;height:44px;background:rgba(100,190,235,0.5)"></div>
<div class="abs" id="wm1" style="left:562px;top:467px;font-size:26px;line-height:40px;font-weight:bold;color:#fff;white-space:nowrap;transform-origin:left top;transform:scaleX(0.727);-webkit-text-stroke:0.7px #fff;text-shadow:0 0 3px rgba(60,120,160,0.35)">DOWNLOADS</div>
<div class="abs" id="wm2" style="left:720px;top:467px;font-size:26px;line-height:40px;font-weight:bold;color:#fff;white-space:nowrap;transform-origin:left top;transform:scaleX(0.7);-webkit-text-stroke:0.7px #fff;text-shadow:0 0 3px rgba(60,120,160,0.35)">.GURU</div>
<svg class="abs" style="left:690px;top:464px" width="30" height="36" viewBox="690 464 30 36">
<path d="M698.4,478.8 L704.8,485.2" stroke="#3cb64a" stroke-width="5.2" stroke-linecap="round" fill="none"/>
<path d="M711.6,479 L705.2,485.2" stroke="#2e8fe0" stroke-width="5.2" stroke-linecap="round" fill="none"/>
<path d="M705,472.8 V482" stroke="#fde23a" stroke-width="5.2" stroke-linecap="round" fill="none"/>
<path d="M704.2,482.5 L704.8,485.4" stroke="#2a9a40" stroke-width="3.4" stroke-linecap="round" fill="none" opacity="0.8"/>
<path d="M698.2,493.1 H711.2" stroke="#fbae17" stroke-width="4.8" stroke-linecap="round" fill="none"/>
</svg>

<!-- ============ SIDEBAR ============ -->
<div id="side">
<div id="logo"></div>
<div id="logoline"></div>
<div id="tool"></div>
<svg class="abs" style="left:0;top:0" width="220" height="57" viewBox="0 0 220 57">
<defs>
<linearGradient id="lg1" x1="0" y1="0" x2="1" y2="0"><stop offset="0" stop-color="#7f8b92"/><stop offset="0.45" stop-color="#f4f6f7"/><stop offset="1" stop-color="#ffffff"/></linearGradient>
<linearGradient id="lg2" x1="0" y1="0" x2="1" y2="0"><stop offset="0" stop-color="#ffffff"/><stop offset="0.35" stop-color="#e6e6e6"/><stop offset="1" stop-color="#857f78"/></linearGradient>
<linearGradient id="lg3" x1="0" y1="0" x2="1" y2="0"><stop offset="0" stop-color="#8e969b"/><stop offset="0.5" stop-color="#e9ebec"/><stop offset="1" stop-color="#ffffff"/></linearGradient>
<linearGradient id="lg4" x1="0" y1="0" x2="1" y2="0"><stop offset="0" stop-color="#ffffff"/><stop offset="0.5" stop-color="#d2d4d6"/><stop offset="1" stop-color="#9a9c9e"/></linearGradient>
</defs>
<path d="M2,4 L101,4 L107,10 L7.5,10 Z" fill="url(#lg1)"/>
<path d="M127,38.4 L202,38.4 L208.6,45.7 L133.4,45.7 Z" fill="url(#lg2)"/>
<text x="14.3" y="44.2" font-family="Liberation Sans, sans-serif" font-weight="bold" font-size="32.8" textLength="78" lengthAdjust="spacingAndGlyphs" fill="url(#lg3)" stroke="url(#lg3)" stroke-width="0.9" stroke-linejoin="round">LPAR</text>
<text x="137.6" y="27.4" font-family="Liberation Sans, sans-serif" font-weight="bold" font-size="31" textLength="64.5" lengthAdjust="spacingAndGlyphs" fill="url(#lg4)" stroke="url(#lg4)" stroke-width="0.8" stroke-linejoin="round">RRD</text>
<!-- digital 2 -->
<path d="M103,4.2 L128.6,4.2 L122.5,10.5 L108.3,10.5 Z" fill="#f2f5f6"/>
<path d="M129.3,4.6 L129.3,20 L122.6,21 L122.6,11 Z" fill="#8fc5d2"/>
<path d="M109.5,21 L128.8,21 L122.5,28.6 L105.8,28.6 Z" fill="#4794a6"/>
<path d="M102.8,29.4 L108.3,27.8 L108.3,38.2 L102.8,44.4 Z" fill="#a9d7e2"/>
<path d="M108.3,38.4 L127,38.4 L133.4,45.7 L102.8,45.7 Z" fill="#f4f6f7"/>
</svg>

<div class="tbtn" style="left:-3px;width:22px"></div>
<div class="tbtn" style="left:23px;width:22px"></div>
<div class="tbtn" style="left:49px;width:133px;background:#2a5063;border-color:#2f5568"></div>
<div class="tbtn" style="left:155.5px;width:26px;background:#264a5e;border-color:#2d5469"></div>
<div class="tbtn" style="left:186px;width:22px;border-color:#254656;background:#214152"></div>
<div class="abs" style="left:3.5px;top:74.5px;width:9px;height:3px;background:#82969f;border-radius:1px"></div>
<div class="abs" style="left:30.4px;top:74.5px;width:9px;height:3px;background:#8fa2ab"></div>
<div class="abs" style="left:33.4px;top:71.5px;width:3px;height:9px;background:#8fa2ab"></div>
<div class="abs" style="left:51px;top:66px;font-size:16px;line-height:20px;color:#b5c7d0;letter-spacing:0.2px">Filter...</div>
<svg class="abs" style="left:160px;top:69px" width="16" height="16" viewBox="0 0 16 16"><circle cx="9.5" cy="6" r="3.3" stroke="#9bb0ba" stroke-width="1.9" fill="none"/><path d="M7 8.5 L3.2 12.3" stroke="#9bb0ba" stroke-width="2.5" stroke-linecap="round"/></svg>
<svg class="abs" style="left:190px;top:70px" width="12" height="12" viewBox="0 0 12 12"><path d="M2.3 2.3 L9.7 9.7 M9.7 2.3 L2.3 9.7" stroke="#44616e" stroke-width="2.9"/></svg>

<div class="tree b" style="left:18px;top:95px">DASHBOARD</div>
<div class="arr-r" style="left:1px;top:118px"></div>
<div class="tree b" style="left:18px;top:115px">CUSTOM GROUPS</div>
<div class="tree b" style="left:18px;top:134px">Reporter</div>
<div class="arr-d" style="left:1px;top:159.5px"></div>
<div class="tree b" style="left:18px;top:154px">IBM Power Systems</div>
<div class="tree b" style="left:29px;top:177px">CPU Workload Estimator</div>
<div class="tree b" style="left:29px;top:197px">Resource Configuration Advisor</div>
<div class="tree b" style="left:29px;top:216px">Heatmap</div>
<div class="tree" style="left:29px;top:236px">Historical reports</div>
<div class="tree" style="left:29px;top:255px">Configuration</div>
<div class="tree" style="left:29px;top:275px">LPAR TOP</div>
<div class="tree" style="left:29px;top:295px">NMON file grapher</div>
<div class="tree" style="left:29px;top:314px">RMC check</div>
<div class="arr-r" style="left:12px;top:337.5px"></div>
<div class="tree b" style="left:29px;top:334px">HMC Totals</div>
<div class="arr-d" style="left:11px;top:358.5px"></div>
<div class="tree b" style="left:29px;top:353px">Power-E880</div>
<div id="sel"></div>
<div class="tree" style="left:41px;top:376px;color:#1a2a33">CPU</div>
<div class="tree" style="left:41px;top:396px">Memory</div>
<div class="tree" style="left:41px;top:416px">Paging aggregated</div>
<div class="tree" style="left:41px;top:435px">Historical reports</div>
<div class="tree" style="left:41px;top:455px">LPAR TOP</div>
<div class="tree" style="left:41px;top:474px">VIEW</div>
<div class="arr-r" style="left:25px;top:497.5px"></div>
<div class="tree b" style="left:41px;top:494px">Shared CPU Pool</div>
<div class="arr-r" style="left:25px;top:517px"></div>
<div class="tree b" style="left:41px;top:513px">LPAR</div>
<div id="sbtrack"></div>
<div id="sbthumb"></div>
</div>
<div id="leftedge"></div>

</div>
</body>
</html>
